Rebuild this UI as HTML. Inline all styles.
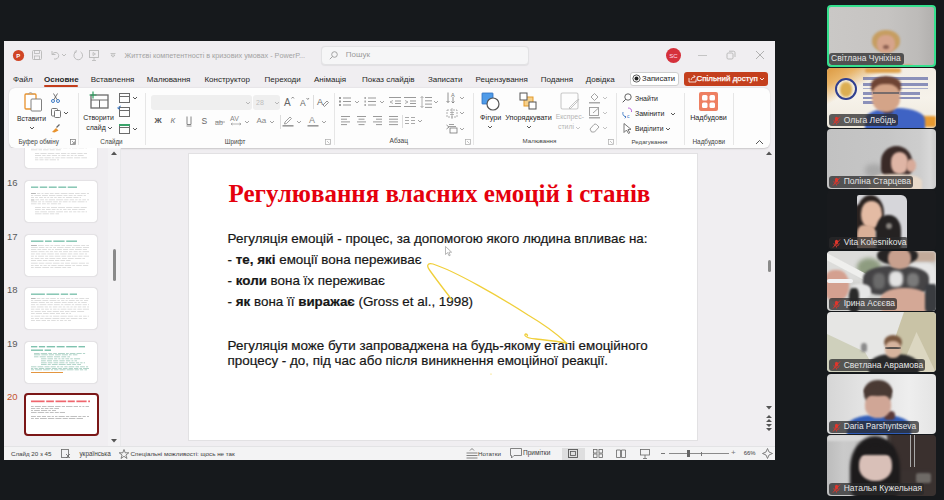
<!DOCTYPE html>
<html><head><meta charset="utf-8">
<style>
*{margin:0;padding:0;box-sizing:border-box}
html,body{width:944px;height:500px;overflow:hidden;background:#16191c;font-family:"Liberation Sans",sans-serif;position:relative}
.a{position:absolute}
svg.a{overflow:visible}
.t{position:absolute;white-space:nowrap;line-height:1}
</style></head><body>

<div class="a" style="left:4px;top:41px;width:771px;height:419px;background:#f0eef1"></div>
<svg class="a" style="left:12px;top:49px;" width="13" height="13" viewBox="0 0 13 13"><circle cx="6.5" cy="6.5" r="5.6" fill="#d04526"/><text x="4.2" y="9" font-size="6" fill="#fff" font-family="Liberation Sans" font-weight="bold">P</text></svg>
<svg class="a" style="left:32px;top:50px;" width="10" height="10" viewBox="0 0 10 10"><rect x="0.5" y="0.5" width="9" height="9" rx="1" fill="none" stroke="#b8b8b8" stroke-width="0.9"/><rect x="2.5" y="0.5" width="5" height="3" fill="none" stroke="#b8b8b8" stroke-width="0.8"/><rect x="2.5" y="6" width="5" height="3.5" fill="none" stroke="#b8b8b8" stroke-width="0.8"/></svg>
<svg class="a" style="left:50px;top:50px;" width="10" height="10" viewBox="0 0 10 10"><path d="M2 1 L2 4.5 L5.5 4.5 M2.2 4.3 C4 1.5 8.5 2 8.7 5.5 C8.8 8 6.5 9.5 4 9" fill="none" stroke="#b8b8b8" stroke-width="0.9"/></svg>
<svg class="a" style="left:61px;top:53px;" width="6" height="4" viewBox="0 0 6 4"><path d="M1 1 L3 3 L5 1" fill="none" stroke="#b8b8b8" stroke-width="0.9"/></svg>
<svg class="a" style="left:73px;top:50px;" width="11" height="11" viewBox="0 0 11 11"><path d="M7.5 1.8 A4.3 4.3 0 1 1 3 1.8" fill="none" stroke="#b8b8b8" stroke-width="0.9"/><path d="M3.2 0 V2.2 H1" fill="none" stroke="#b8b8b8" stroke-width="0.8"/></svg>
<svg class="a" style="left:89px;top:50px;" width="10" height="11" viewBox="0 0 10 11"><rect x="0.5" y="0.5" width="9" height="7" fill="none" stroke="#b8b8b8" stroke-width="0.9"/><path d="M5 7.5 L5 10.5 M3 10.5 L7 10.5 M4 2.5 L4 5.5 L6.5 4 Z" fill="none" stroke="#b8b8b8" stroke-width="0.8"/></svg>
<svg class="a" style="left:110px;top:53px;" width="6" height="5" viewBox="0 0 6 5"><path d="M0.5 0.5 H5.5 M1 2 L3 4.2 L5 2 Z" fill="none" stroke="#b8b8b8" stroke-width="0.8"/></svg>
<div class="t" style="left:124.5px;top:51.5px;font-size:7.25px;color:#a3a3a3;font-weight:normal;font-family:'Liberation Sans';">Життєві компетентності в кризових умовах  -  PowerP...</div>
<div class="a" style="left:321px;top:46px;width:208px;height:19px;background:#f6f6f7;border:1px solid #e2e2e4;border-radius:4px;box-shadow:0 0.5px 1px rgba(0,0,0,.06)"></div>
<svg class="a" style="left:329px;top:51px;" width="9" height="9" viewBox="0 0 9 9"><circle cx="5.5" cy="3.5" r="2.8" fill="none" stroke="#9a9a9a" stroke-width="0.9"/><path d="M3.5 5.5 L0.8 8.2" stroke="#9a9a9a" stroke-width="0.9"/></svg>
<div class="t" style="left:345.8px;top:51.1px;font-size:8px;color:#9a9a9a;font-weight:normal;font-family:'Liberation Sans';">Пошук</div>
<svg class="a" style="left:666px;top:48px;" width="16" height="16" viewBox="0 0 16 16"><circle cx="7.5" cy="7.5" r="7.5" fill="#d5303b"/><text x="3.2" y="9.8" font-size="6" fill="#fde" font-family="Liberation Sans">SC</text></svg>
<div class="a" style="left:698px;top:55px;width:9px;height:1px;background:#c4c4c4"></div>
<svg class="a" style="left:726px;top:50px;" width="10" height="10" viewBox="0 0 10 10"><rect x="1" y="3" width="6" height="6" rx="1.2" fill="none" stroke="#b5b5b5" stroke-width="0.9"/><path d="M3 1.2 H7.5 Q9 1.2 9 2.7 V7" fill="none" stroke="#b5b5b5" stroke-width="0.9"/></svg>
<svg class="a" style="left:755px;top:50px;" width="10" height="10" viewBox="0 0 10 10"><path d="M1 1 L9 9 M9 1 L1 9" stroke="#a9a9a9" stroke-width="0.9"/></svg>
<div class="t" style="left:13.0px;top:75.6px;font-size:8px;color:#262626;font-weight:normal;font-family:'Liberation Sans';">Файл</div>
<div class="t" style="left:44.0px;top:75.6px;font-size:8px;color:#262626;font-weight:bold;font-family:'Liberation Sans';">Основне</div>
<div class="t" style="left:90.7px;top:75.6px;font-size:8px;color:#262626;font-weight:normal;font-family:'Liberation Sans';">Вставлення</div>
<div class="t" style="left:146.8px;top:75.6px;font-size:8px;color:#262626;font-weight:normal;font-family:'Liberation Sans';">Малювання</div>
<div class="t" style="left:204.4px;top:75.6px;font-size:8px;color:#262626;font-weight:normal;font-family:'Liberation Sans';">Конструктор</div>
<div class="t" style="left:264.5px;top:75.6px;font-size:8px;color:#262626;font-weight:normal;font-family:'Liberation Sans';">Переходи</div>
<div class="t" style="left:314.0px;top:75.6px;font-size:8px;color:#262626;font-weight:normal;font-family:'Liberation Sans';">Анімація</div>
<div class="t" style="left:362.0px;top:75.6px;font-size:8px;color:#262626;font-weight:normal;font-family:'Liberation Sans';">Показ слайдів</div>
<div class="t" style="left:428.0px;top:75.6px;font-size:8px;color:#262626;font-weight:normal;font-family:'Liberation Sans';">Записати</div>
<div class="t" style="left:475.6px;top:75.6px;font-size:8px;color:#262626;font-weight:normal;font-family:'Liberation Sans';">Рецензування</div>
<div class="t" style="left:540.7px;top:75.6px;font-size:8px;color:#262626;font-weight:normal;font-family:'Liberation Sans';">Подання</div>
<div class="t" style="left:585.8px;top:75.6px;font-size:8px;color:#262626;font-weight:normal;font-family:'Liberation Sans';">Довідка</div>
<div class="a" style="left:44px;top:84.5px;width:34px;height:2px;background:#c43e1c;border-radius:1px"></div>
<div class="a" style="left:629.5px;top:71.5px;width:49.5px;height:14.5px;background:#fff;border:1px solid #cfcfcf;border-radius:3px"></div>
<svg class="a" style="left:631.5px;top:74px;" width="9" height="9" viewBox="0 0 9 9"><circle cx="4.5" cy="4.5" r="3.6" fill="none" stroke="#333" stroke-width="0.8"/><circle cx="4.5" cy="4.5" r="2" fill="#222"/></svg>
<div class="t" style="left:642.0px;top:74.8px;font-size:7.7px;color:#222;font-weight:normal;font-family:'Liberation Sans';">Записати</div>
<div class="a" style="left:684px;top:71.5px;width:83.5px;height:14.5px;background:#c43f1d;border-radius:3px"></div>
<svg class="a" style="left:688px;top:74px;" width="9" height="9" viewBox="0 0 9 9"><path d="M1 4 V8 H8 V5.5 M3 6 Q3.5 3 7 2.5 L5.5 1 M7 2.5 L5.5 4" fill="none" stroke="#fff" stroke-width="0.8"/></svg>
<div class="t" style="left:696.4px;top:74.6px;font-size:8px;color:#fff;font-weight:normal;font-family:'Liberation Sans';-webkit-text-stroke:0.25px #fff;">Спільний доступ</div>
<svg class="a" style="left:759px;top:77px;" width="6" height="4" viewBox="0 0 6 4"><path d="M1 1 L3 3 L5 1" fill="none" stroke="#fff" stroke-width="0.9"/></svg>
<div class="a" style="left:9px;top:88px;width:761px;height:60px;background:#fdfdfd;border-radius:6px;box-shadow:0 0.5px 1.5px rgba(0,0,0,.16)"></div>
<div class="a" style="left:77.6px;top:93px;width:1px;height:52px;background:#e6e6e6"></div>
<div class="a" style="left:145.4px;top:93px;width:1px;height:52px;background:#e6e6e6"></div>
<div class="a" style="left:333.5px;top:93px;width:1px;height:52px;background:#e6e6e6"></div>
<div class="a" style="left:473px;top:93px;width:1px;height:52px;background:#e6e6e6"></div>
<div class="a" style="left:616px;top:93px;width:1px;height:52px;background:#e6e6e6"></div>
<div class="a" style="left:683.5px;top:93px;width:1px;height:52px;background:#e6e6e6"></div>
<div class="a" style="left:733px;top:93px;width:1px;height:52px;background:#e6e6e6"></div>
<svg class="a" style="left:24px;top:91px;" width="19" height="21" viewBox="0 0 19 21"><rect x="1" y="3" width="11" height="15" rx="1" fill="#fff" stroke="#e8922d" stroke-width="1.3"/><path d="M4 3.5 L6.5 1 L9 3.5" fill="none" stroke="#9a9a9a" stroke-width="0.9"/><rect x="7" y="8" width="10.5" height="12" rx="1" fill="#fff" stroke="#808080" stroke-width="1"/></svg>
<div class="t" style="left:-28.5px;width:120px;text-align:center;top:115.8px;font-size:6.8px;color:#262626;font-weight:normal;">Вставити</div>
<svg class="a" style="left:28.5px;top:126px;" width="6" height="4" viewBox="0 0 6 4"><path d="M1 1 L3 3 L5 1" fill="none" stroke="#444" stroke-width="0.9"/></svg>
<svg class="a" style="left:51px;top:93px;" width="9" height="10" viewBox="0 0 9 10"><circle cx="2" cy="8" r="1.5" fill="none" stroke="#2e6fbf" stroke-width="0.9"/><circle cx="7" cy="8" r="1.5" fill="none" stroke="#2e6fbf" stroke-width="0.9"/><path d="M2.8 6.8 L6.5 0.5 M6.2 6.8 L2.5 0.5" stroke="#555" stroke-width="0.8"/></svg>
<svg class="a" style="left:51px;top:108px;" width="10" height="10" viewBox="0 0 10 10"><rect x="0.5" y="0.5" width="6" height="7.5" rx="1" fill="none" stroke="#666" stroke-width="0.9"/><rect x="3.5" y="2.5" width="6" height="7" rx="1" fill="#fff" stroke="#666" stroke-width="0.9"/></svg>
<svg class="a" style="left:63px;top:111px;" width="6" height="4" viewBox="0 0 6 4"><path d="M1 1 L3 3 L5 1" fill="none" stroke="#444" stroke-width="0.9"/></svg>
<svg class="a" style="left:51px;top:123px;" width="10" height="10" viewBox="0 0 10 10"><path d="M1 9 L5 5 L7.5 7.5 L3.5 9.5 Z" fill="#e8922d"/><path d="M5.5 4.5 L8.5 1.5" stroke="#666" stroke-width="1.2"/></svg>
<div class="t" style="left:-21.3px;width:120px;text-align:center;top:139.1px;font-size:6.3px;color:#444;font-weight:normal;">Буфер обміну</div>
<svg class="a" style="left:70px;top:139px;" width="6" height="6" viewBox="0 0 6 6"><rect x="0.5" y="0.5" width="5" height="5" fill="none" stroke="#777" stroke-width="0.7"/><path d="M2 2 L4.5 4.5 M4.5 2.5 V4.5 H2.5" fill="none" stroke="#777" stroke-width="0.7"/></svg>
<svg class="a" style="left:89px;top:91px;" width="20" height="19" viewBox="0 0 20 19"><rect x="2" y="4" width="17" height="13" fill="none" stroke="#6b6b6b" stroke-width="1.3"/><path d="M2 9 H19 M10.5 9 V17" stroke="#6b6b6b" stroke-width="1"/><path d="M4 0.5 V7.5 M0.5 4 H7.5" stroke="#2a9d5c" stroke-width="1.2"/></svg>
<div class="t" style="left:38.5px;width:120px;text-align:center;top:114.2px;font-size:7px;color:#262626;font-weight:normal;">Створити</div>
<div class="t" style="left:36.0px;width:120px;text-align:center;top:124.2px;font-size:7px;color:#262626;font-weight:normal;">слайд</div>
<svg class="a" style="left:106.5px;top:126px;" width="6" height="4" viewBox="0 0 6 4"><path d="M1 1 L3 3 L5 1" fill="none" stroke="#444" stroke-width="0.9"/></svg>
<svg class="a" style="left:119px;top:92.7px;" width="11" height="10" viewBox="0 0 11 10"><rect x="0.5" y="0.5" width="10" height="9" fill="none" stroke="#6b6b6b" stroke-width="1"/><path d="M0.5 3.5 H10.5" stroke="#6b6b6b" stroke-width="1"/></svg>
<svg class="a" style="left:119px;top:107px;" width="11" height="10" viewBox="0 0 11 10"><rect x="0.5" y="0.5" width="10" height="9" fill="none" stroke="#6b6b6b" stroke-width="1"/><path d="M0.5 3.5 H10.5" stroke="#6b6b6b" stroke-width="1"/></svg>
<svg class="a" style="left:119px;top:123.69999999999999px;" width="11" height="10" viewBox="0 0 11 10"><rect x="0.5" y="0.5" width="10" height="9" fill="none" stroke="#6b6b6b" stroke-width="1"/><path d="M0.5 3.5 H10.5" stroke="#6b6b6b" stroke-width="1"/></svg>
<div class="a" style="left:119px;top:123.7px;width:11px;height:2px;background:#3aa36a"></div>
<svg class="a" style="left:117px;top:105px;" width="5" height="5" viewBox="0 0 5 5"><path d="M4 1 Q1 1 1.5 4 M0.5 2.5 L1.5 4 L3 3" fill="none" stroke="#2e6fbf" stroke-width="0.8"/></svg>
<svg class="a" style="left:131.7px;top:95.7px;" width="6" height="4" viewBox="0 0 6 4"><path d="M1 1 L3 3 L5 1" fill="none" stroke="#444" stroke-width="0.9"/></svg>
<svg class="a" style="left:131.7px;top:126.69999999999999px;" width="6" height="4" viewBox="0 0 6 4"><path d="M1 1 L3 3 L5 1" fill="none" stroke="#444" stroke-width="0.9"/></svg>
<div class="t" style="left:51.4px;width:120px;text-align:center;top:139.1px;font-size:6.3px;color:#444;font-weight:normal;">Слайди</div>
<div class="a" style="left:151px;top:95px;width:101px;height:14.5px;background:#efefef;border-radius:3px"></div>
<div class="a" style="left:253px;top:95px;width:27px;height:14.5px;background:#efefef;border-radius:3px"></div>
<svg class="a" style="left:245px;top:100.5px;" width="6" height="4" viewBox="0 0 6 4"><path d="M1 1 L3 3 L5 1" fill="none" stroke="#b0b0b0" stroke-width="0.9"/></svg>
<svg class="a" style="left:274px;top:100.5px;" width="6" height="4" viewBox="0 0 6 4"><path d="M1 1 L3 3 L5 1" fill="none" stroke="#b0b0b0" stroke-width="0.9"/></svg>
<div class="t" style="left:256.0px;top:98.7px;font-size:7px;color:#bdbdbd;font-weight:normal;font-family:'Liberation Sans';">28</div>
<svg class="a" style="left:284px;top:96px;" width="11" height="11" viewBox="0 0 11 11"><text x="0" y="10" font-size="10" fill="#666" font-family="Liberation Sans">A</text><path d="M7.5 2.5 L8.8 1 L10 2.5" fill="none" stroke="#666" stroke-width="0.7"/></svg>
<svg class="a" style="left:300px;top:97px;" width="10" height="10" viewBox="0 0 10 10"><text x="0" y="9" font-size="8.5" fill="#666" font-family="Liberation Sans">A</text><path d="M6.5 1 L7.8 2.5 L9 1" fill="none" stroke="#666" stroke-width="0.7"/></svg>
<div class="a" style="left:313px;top:95px;width:1px;height:14px;background:#ddd"></div>
<svg class="a" style="left:317px;top:96px;" width="12" height="11" viewBox="0 0 12 11"><text x="0" y="9" font-size="9" fill="#666" font-family="Liberation Sans">A</text><path d="M6 9 L10 5 L11.5 6.5 L7.5 10.5 Z" fill="none" stroke="#666" stroke-width="0.7"/></svg>
<div class="t" style="left:154.5px;top:117.0px;font-size:8px;color:#555;font-weight:bold;font-family:'Liberation Sans';">Ж</div>
<div class="t" style="left:170.5px;top:117.0px;font-size:8px;color:#777;font-weight:normal;font-family:'Liberation Sans';font-style:italic">К</div>
<svg class="a" style="left:186px;top:116px;" width="6" height="11" viewBox="0 0 6 11"><path d="M1 0.5 V8.5 H5 V0.5" fill="none" stroke="#777" stroke-width="0.9"/><path d="M0.5 10 H5.5" stroke="#777" stroke-width="0.8"/></svg>
<div class="t" style="left:201.5px;top:116.7px;font-size:8.5px;color:#666;font-weight:normal;font-family:'Liberation Sans';">S</div>
<svg class="a" style="left:215px;top:117px;" width="11" height="9" viewBox="0 0 11 9"><text x="0" y="7.5" font-size="7" fill="#888" font-family="Liberation Sans">ab</text><path d="M0 5 H10" stroke="#888" stroke-width="0.7"/></svg>
<svg class="a" style="left:230px;top:114px;" width="13" height="13" viewBox="0 0 13 13"><text x="0" y="7" font-size="7" fill="#888" font-family="Liberation Sans">AV</text><path d="M1 10 H11 M1 10 L2.5 9 M1 10 L2.5 11 M11 10 L9.5 9 M11 10 L9.5 11" fill="none" stroke="#888" stroke-width="0.6"/></svg>
<svg class="a" style="left:244px;top:119.5px;" width="6" height="4" viewBox="0 0 6 4"><path d="M1 1 L3 3 L5 1" fill="none" stroke="#999" stroke-width="0.9"/></svg>
<div class="t" style="left:256.5px;top:117.0px;font-size:8px;color:#888;font-weight:normal;font-family:'Liberation Sans';">Aa</div>
<svg class="a" style="left:269px;top:119.5px;" width="6" height="4" viewBox="0 0 6 4"><path d="M1 1 L3 3 L5 1" fill="none" stroke="#999" stroke-width="0.9"/></svg>
<div class="a" style="left:280px;top:115px;width:1px;height:14px;background:#ddd"></div>
<svg class="a" style="left:282px;top:114px;" width="12" height="13" viewBox="0 0 12 13"><path d="M3 8 L8 3 L9.5 4.5 L4.5 9.5 L2.5 10 Z" fill="none" stroke="#888" stroke-width="0.8"/><rect x="0.5" y="11" width="11" height="1.6" fill="#999"/></svg>
<svg class="a" style="left:296px;top:119.5px;" width="6" height="4" viewBox="0 0 6 4"><path d="M1 1 L3 3 L5 1" fill="none" stroke="#999" stroke-width="0.9"/></svg>
<svg class="a" style="left:307px;top:114px;" width="12" height="13" viewBox="0 0 12 13"><text x="2" y="9" font-size="9" fill="#888" font-family="Liberation Sans">A</text><rect x="0.5" y="11" width="11" height="1.6" fill="#999"/></svg>
<svg class="a" style="left:321px;top:119.5px;" width="6" height="4" viewBox="0 0 6 4"><path d="M1 1 L3 3 L5 1" fill="none" stroke="#999" stroke-width="0.9"/></svg>
<div class="t" style="left:175.0px;width:120px;text-align:center;top:138.5px;font-size:6.3px;color:#444;font-weight:normal;">Шрифт</div>
<svg class="a" style="left:325px;top:139px;" width="6" height="6" viewBox="0 0 6 6"><rect x="0.5" y="0.5" width="5" height="5" fill="none" stroke="#aaa" stroke-width="0.7"/><path d="M2 2 L4.5 4.5" stroke="#aaa" stroke-width="0.7"/></svg>
<svg class="a" style="left:339px;top:97px;" width="12" height="10" viewBox="0 0 12 10"><rect x="0" y="0.0" width="2" height="2" fill="#9a9a9a"/><rect x="4" y="0.5" width="8" height="1" fill="#9a9a9a"/><rect x="0" y="3.5" width="2" height="2" fill="#9a9a9a"/><rect x="4" y="4.0" width="8" height="1" fill="#9a9a9a"/><rect x="0" y="7.0" width="2" height="2" fill="#9a9a9a"/><rect x="4" y="7.5" width="8" height="1" fill="#9a9a9a"/></svg>
<svg class="a" style="left:354px;top:100px;" width="6" height="4" viewBox="0 0 6 4"><path d="M1 1 L3 3 L5 1" fill="none" stroke="#999" stroke-width="0.9"/></svg>
<svg class="a" style="left:364px;top:97px;" width="12" height="10" viewBox="0 0 12 10"><rect x="0.5" y="0.0" width="1.3" height="2" fill="#9a9a9a"/><rect x="4" y="0.5" width="8" height="1" fill="#9a9a9a"/><rect x="0.5" y="3.5" width="1.3" height="2" fill="#9a9a9a"/><rect x="4" y="4.0" width="8" height="1" fill="#9a9a9a"/><rect x="0.5" y="7.0" width="1.3" height="2" fill="#9a9a9a"/><rect x="4" y="7.5" width="8" height="1" fill="#9a9a9a"/></svg>
<svg class="a" style="left:379px;top:100px;" width="6" height="4" viewBox="0 0 6 4"><path d="M1 1 L3 3 L5 1" fill="none" stroke="#999" stroke-width="0.9"/></svg>
<svg class="a" style="left:389px;top:97px;" width="12" height="10" viewBox="0 0 12 10"><rect x="0" y="0" width="12" height="1" fill="#9a9a9a"/><rect x="6" y="3.5" width="6" height="1" fill="#9a9a9a"/><rect x="6" y="6" width="6" height="1" fill="#9a9a9a"/><rect x="0" y="9" width="12" height="1" fill="#9a9a9a"/><path d="M4 3.5 L1 5 L4 6.5" fill="none" stroke="#9a9a9a" stroke-width="0.8"/></svg>
<svg class="a" style="left:404px;top:97px;" width="12" height="10" viewBox="0 0 12 10"><rect x="0" y="0" width="12" height="1" fill="#9a9a9a"/><rect x="6" y="3.5" width="6" height="1" fill="#9a9a9a"/><rect x="6" y="6" width="6" height="1" fill="#9a9a9a"/><rect x="0" y="9" width="12" height="1" fill="#9a9a9a"/><path d="M1 3.5 L4 5 L1 6.5" fill="none" stroke="#9a9a9a" stroke-width="0.8"/></svg>
<svg class="a" style="left:420px;top:96px;" width="12" height="12" viewBox="0 0 12 12"><path d="M2 0.5 V11.5 M0.5 2 L2 0.5 L3.5 2 M0.5 10 L2 11.5 L3.5 10" fill="none" stroke="#9a9a9a" stroke-width="0.8"/><rect x="5" y="1.0" width="7" height="1" fill="#9a9a9a"/><rect x="5" y="4.3" width="7" height="1" fill="#9a9a9a"/><rect x="5" y="7.6" width="7" height="1" fill="#9a9a9a"/><rect x="5" y="10.899999999999999" width="7" height="1" fill="#9a9a9a"/></svg>
<svg class="a" style="left:433px;top:100px;" width="6" height="4" viewBox="0 0 6 4"><path d="M1 1 L3 3 L5 1" fill="none" stroke="#999" stroke-width="0.9"/></svg>
<svg class="a" style="left:341.1px;top:116px;" width="10" height="10" viewBox="0 0 10 10"><rect x="0" y="0.0" width="9" height="1" fill="#9a9a9a"/><rect x="0" y="2.7" width="6" height="1" fill="#9a9a9a"/><rect x="0" y="5.4" width="9" height="1" fill="#9a9a9a"/><rect x="0" y="8.100000000000001" width="6" height="1" fill="#9a9a9a"/></svg>
<svg class="a" style="left:357.0px;top:116px;" width="10" height="10" viewBox="0 0 10 10"><rect x="0" y="0.0" width="9" height="1" fill="#9a9a9a"/><rect x="1.5" y="2.7" width="6" height="1" fill="#9a9a9a"/><rect x="0" y="5.4" width="9" height="1" fill="#9a9a9a"/><rect x="1.5" y="8.100000000000001" width="6" height="1" fill="#9a9a9a"/></svg>
<svg class="a" style="left:372.5px;top:116px;" width="10" height="10" viewBox="0 0 10 10"><rect x="0" y="0.0" width="9" height="1" fill="#9a9a9a"/><rect x="3" y="2.7" width="6" height="1" fill="#9a9a9a"/><rect x="0" y="5.4" width="9" height="1" fill="#9a9a9a"/><rect x="3" y="8.100000000000001" width="6" height="1" fill="#9a9a9a"/></svg>
<svg class="a" style="left:388.5px;top:116px;" width="10" height="10" viewBox="0 0 10 10"><rect x="0" y="0.0" width="9" height="1" fill="#9a9a9a"/><rect x="0" y="2.7" width="9" height="1" fill="#9a9a9a"/><rect x="0" y="5.4" width="9" height="1" fill="#9a9a9a"/><rect x="0" y="8.100000000000001" width="9" height="1" fill="#9a9a9a"/></svg>
<div class="a" style="left:401.5px;top:115px;width:1px;height:13px;background:#ddd"></div>
<svg class="a" style="left:405px;top:117px;" width="10" height="8" viewBox="0 0 10 8"><rect x="0" y="0" width="4" height="1" fill="#aaa"/><rect x="0" y="3" width="4" height="1" fill="#aaa"/><rect x="0" y="6" width="4" height="1" fill="#aaa"/><rect x="6" y="0" width="4" height="1" fill="#aaa"/><rect x="6" y="3" width="4" height="1" fill="#aaa"/><rect x="6" y="6" width="4" height="1" fill="#aaa"/></svg>
<svg class="a" style="left:417px;top:119px;" width="6" height="4" viewBox="0 0 6 4"><path d="M1 1 L3 3 L5 1" fill="none" stroke="#999" stroke-width="0.9"/></svg>
<svg class="a" style="left:446px;top:92px;" width="12" height="12" viewBox="0 0 12 12"><path d="M2 0.5 V10.5 M0.5 9 L2 10.5 L3.5 9 M7 11 V5 M5.5 9.5 L7 11 L8.5 9.5" fill="none" stroke="#777" stroke-width="0.8"/><text x="5" y="5" font-size="5.5" fill="#777" font-family="Liberation Sans">A</text></svg>
<svg class="a" style="left:458.6px;top:96px;" width="6" height="4" viewBox="0 0 6 4"><path d="M1 1 L3 3 L5 1" fill="none" stroke="#999" stroke-width="0.9"/></svg>
<svg class="a" style="left:446px;top:108px;" width="12" height="11" viewBox="0 0 12 11"><rect x="1" y="2" width="10" height="7" fill="none" stroke="#9a9a9a" stroke-width="0.8" stroke-dasharray="2 1"/><path d="M6 0 V11 M4 4.5 H8 M4 6.5 H8" stroke="#9a9a9a" stroke-width="0.7"/></svg>
<svg class="a" style="left:458.6px;top:111.3px;" width="6" height="4" viewBox="0 0 6 4"><path d="M1 1 L3 3 L5 1" fill="none" stroke="#999" stroke-width="0.9"/></svg>
<svg class="a" style="left:446px;top:123px;" width="12" height="11" viewBox="0 0 12 11"><path d="M0.5 2 L3 4 L0.5 6" fill="none" stroke="#777" stroke-width="0.8"/><rect x="4" y="5" width="7" height="5" fill="none" stroke="#777" stroke-width="0.8"/><path d="M3 1.5 H8 M3 3.5 H10" stroke="#777" stroke-width="0.7"/></svg>
<svg class="a" style="left:458.6px;top:126.69999999999999px;" width="6" height="4" viewBox="0 0 6 4"><path d="M1 1 L3 3 L5 1" fill="none" stroke="#999" stroke-width="0.9"/></svg>
<div class="t" style="left:338.8px;width:120px;text-align:center;top:137.8px;font-size:6.6px;color:#444;font-weight:normal;">Абзац</div>
<svg class="a" style="left:465px;top:139px;" width="6" height="6" viewBox="0 0 6 6"><rect x="0.5" y="0.5" width="5" height="5" fill="none" stroke="#aaa" stroke-width="0.7"/><path d="M2 2 L4.5 4.5" stroke="#aaa" stroke-width="0.7"/></svg>
<svg class="a" style="left:481px;top:92px;" width="20" height="19" viewBox="0 0 20 19"><rect x="1" y="1" width="11" height="11" rx="0.5" fill="#4f9be8" stroke="#2d6fc0" stroke-width="0.8"/><circle cx="12" cy="12" r="6" fill="#fff" stroke="#555" stroke-width="1.2"/></svg>
<div class="t" style="left:430.7px;width:120px;text-align:center;top:114.0px;font-size:7.2px;color:#262626;font-weight:normal;">Фігури</div>
<svg class="a" style="left:487px;top:125px;" width="6" height="4" viewBox="0 0 6 4"><path d="M1 1 L3 3 L5 1" fill="none" stroke="#444" stroke-width="0.9"/></svg>
<svg class="a" style="left:519px;top:92px;" width="19" height="19" viewBox="0 0 19 19"><rect x="5" y="5" width="9" height="9" fill="#f6d08a" stroke="#e39a2a" stroke-width="1"/><rect x="1" y="1" width="7" height="7" fill="#fff" stroke="#555" stroke-width="1"/><rect x="10" y="10" width="7" height="7" fill="#fff" stroke="#555" stroke-width="1"/></svg>
<div class="t" style="left:468.5px;width:120px;text-align:center;top:114.0px;font-size:7.3px;color:#262626;font-weight:normal;">Упорядкувати</div>
<svg class="a" style="left:525.5px;top:125px;" width="6" height="4" viewBox="0 0 6 4"><path d="M1 1 L3 3 L5 1" fill="none" stroke="#444" stroke-width="0.9"/></svg>
<svg class="a" style="left:560px;top:92px;" width="21" height="19" viewBox="0 0 21 19"><rect x="1" y="1" width="17" height="16" rx="1.5" fill="none" stroke="#c9c9c9" stroke-width="1.1"/><path d="M9 16 L16 9 L19 7 L17 10 L10 17 Z" fill="none" stroke="#bdbdbd" stroke-width="0.9"/></svg>
<div class="t" style="left:509.8px;width:120px;text-align:center;top:114.2px;font-size:6.9px;color:#b5b5b5;font-weight:normal;">Експрес-</div>
<div class="t" style="left:558.0px;top:123.8px;font-size:6.9px;color:#b5b5b5;font-weight:normal;font-family:'Liberation Sans';">стилі</div>
<svg class="a" style="left:575px;top:125.6px;" width="6" height="4" viewBox="0 0 6 4"><path d="M1 1 L3 3 L5 1" fill="none" stroke="#c0c0c0" stroke-width="0.9"/></svg>
<svg class="a" style="left:589px;top:92px;" width="11" height="12" viewBox="0 0 11 12"><path d="M2 5 L5.5 1.5 L9 5 L5.5 8.5 Z" fill="none" stroke="#9a9a9a" stroke-width="0.9"/><rect x="0" y="10" width="11" height="1.5" fill="#aaa"/></svg>
<svg class="a" style="left:602px;top:96px;" width="6" height="4" viewBox="0 0 6 4"><path d="M1 1 L3 3 L5 1" fill="none" stroke="#bbb" stroke-width="0.9"/></svg>
<svg class="a" style="left:589px;top:107px;" width="11" height="12" viewBox="0 0 11 12"><rect x="0.5" y="0.5" width="9" height="8" fill="none" stroke="#9a9a9a" stroke-width="0.9"/><path d="M4 6 L9 1.5" stroke="#9a9a9a" stroke-width="0.9"/><rect x="0" y="10" width="11" height="1.5" fill="#aaa"/></svg>
<svg class="a" style="left:602px;top:111.3px;" width="6" height="4" viewBox="0 0 6 4"><path d="M1 1 L3 3 L5 1" fill="none" stroke="#bbb" stroke-width="0.9"/></svg>
<svg class="a" style="left:589px;top:123px;" width="11" height="10" viewBox="0 0 11 10"><path d="M1 6 L5 1.5 Q6 0.5 7.5 1.5 L10 4 L5.5 9 H2.5 Z" fill="none" stroke="#9a9a9a" stroke-width="0.9"/></svg>
<svg class="a" style="left:602px;top:126px;" width="6" height="4" viewBox="0 0 6 4"><path d="M1 1 L3 3 L5 1" fill="none" stroke="#bbb" stroke-width="0.9"/></svg>
<div class="t" style="left:479.5px;width:120px;text-align:center;top:138.0px;font-size:6.2px;color:#444;font-weight:normal;">Малювання</div>
<svg class="a" style="left:608px;top:139px;" width="6" height="6" viewBox="0 0 6 6"><rect x="0.5" y="0.5" width="5" height="5" fill="none" stroke="#aaa" stroke-width="0.7"/><path d="M2 2 L4.5 4.5" stroke="#aaa" stroke-width="0.7"/></svg>
<svg class="a" style="left:622px;top:93px;" width="10" height="10" viewBox="0 0 10 10"><circle cx="6" cy="4" r="3.2" fill="none" stroke="#555" stroke-width="0.9"/><path d="M3.7 6.3 L0.7 9.3" stroke="#555" stroke-width="1"/></svg>
<div class="t" style="left:635.0px;top:94.7px;font-size:7px;color:#262626;font-weight:normal;font-family:'Liberation Sans';">Знайти</div>
<svg class="a" style="left:621px;top:107px;" width="12" height="12" viewBox="0 0 12 12"><path d="M2 5 Q1 9 5 10 M5 10 L3.5 8.8 M5 10 L3.8 11.3" fill="none" stroke="#2e6fbf" stroke-width="0.8"/><path d="M7 1 Q11 1 10.5 5" fill="none" stroke="#b04ad0" stroke-width="0.8"/><text x="6" y="11" font-size="5" fill="#2e6fbf" font-family="Liberation Sans">c</text></svg>
<div class="t" style="left:635.0px;top:109.7px;font-size:7px;color:#262626;font-weight:normal;font-family:'Liberation Sans';">Замінити</div>
<svg class="a" style="left:670px;top:111.5px;" width="6" height="4" viewBox="0 0 6 4"><path d="M1 1 L3 3 L5 1" fill="none" stroke="#444" stroke-width="0.9"/></svg>
<svg class="a" style="left:623px;top:123px;" width="9" height="11" viewBox="0 0 9 11"><path d="M1 0.5 L1 9.5 L3.5 7 L5.5 10.5 L6.8 9.8 L5 6.5 L8 6.3 Z" fill="#fff" stroke="#555" stroke-width="0.8"/></svg>
<div class="t" style="left:635.0px;top:125.7px;font-size:6.8px;color:#262626;font-weight:normal;font-family:'Liberation Sans';">Виділити</div>
<svg class="a" style="left:665px;top:126.6px;" width="6" height="4" viewBox="0 0 6 4"><path d="M1 1 L3 3 L5 1" fill="none" stroke="#444" stroke-width="0.9"/></svg>
<div class="t" style="left:589.5px;width:120px;text-align:center;top:138.9px;font-size:6.1px;color:#444;font-weight:normal;">Редагування</div>
<svg class="a" style="left:699px;top:92px;" width="19" height="19" viewBox="0 0 19 19"><rect x="0" y="0" width="19" height="19" rx="2" fill="#ee8062"/><rect x="3" y="3" width="5.5" height="5.5" rx="1.5" fill="#fff"/><rect x="10.5" y="3" width="5.5" height="5.5" rx="1.5" fill="#fff"/><rect x="3" y="10.5" width="5.5" height="5.5" rx="1.5" fill="#fff"/><rect x="10.5" y="10.5" width="5.5" height="5.5" rx="1.5" fill="#fff"/></svg>
<div class="t" style="left:648.5px;width:120px;text-align:center;top:114.2px;font-size:7.2px;color:#262626;font-weight:normal;">Надбудови</div>
<div class="t" style="left:648.8px;width:120px;text-align:center;top:138.5px;font-size:6.4px;color:#444;font-weight:normal;">Надбудови</div>
<svg class="a" style="left:755px;top:139px;" width="9" height="6" viewBox="0 0 9 6"><path d="M1 5 L4.5 1.5 L8 5" fill="none" stroke="#444" stroke-width="0.9"/></svg>
<div class="a" style="left:4px;top:148px;width:116px;height:298px;background:#f0eef1"></div>
<div class="a" style="left:108px;top:148px;width:12px;height:298px;background:#f3f2f4"></div>
<div class="a" style="left:120px;top:148px;width:1px;height:298px;background:#e8e8ea"></div>
<svg class="a" style="left:110px;top:150px;" width="8" height="6" viewBox="0 0 8 6"><path d="M1 5 L4 1.5 L7 5 Z" fill="#555"/></svg>
<svg class="a" style="left:110px;top:438px;" width="8" height="6" viewBox="0 0 8 6"><path d="M1 1 L4 4.5 L7 1 Z" fill="#555"/></svg>
<div class="a" style="left:112.5px;top:249px;width:3px;height:32px;background:#8a8a8a;border-radius:2px"></div>
<div class="a" style="left:0;top:0;width:944px;height:500px;clip-path:inset(148px 0 54px 0)">
<div class="a" style="left:25.4px;top:127px;width:72px;height:41px;background:#fff;border-radius:3px;box-shadow:0 0 1.2px rgba(0,0,0,.35)"></div>
<svg class="a" style="left:25.4px;top:127px;" width="72" height="41" viewBox="0 0 72 41"><rect x="6.0" y="5.5" width="8.6" height="1.4" fill="#2a9a7a" opacity="0.6"/><rect x="16.2" y="5.5" width="7.2" height="1.4" fill="#2a9a7a" opacity="0.6"/><rect x="25.0" y="5.5" width="11.2" height="1.4" fill="#2a9a7a" opacity="0.6"/><rect x="37.8" y="5.5" width="6.6" height="1.4" fill="#2a9a7a" opacity="0.6"/><rect x="46.0" y="5.5" width="6.0" height="1.4" fill="#2a9a7a" opacity="0.6"/><rect x="6.0" y="12" width="3.8" height="0.8999999999999999" fill="#444" opacity="0.42"/><rect x="10.9" y="12" width="2.3" height="0.7" fill="#8a8a8a" opacity="0.42"/><rect x="14.3" y="12" width="4.5" height="0.7" fill="#8a8a8a" opacity="0.42"/><rect x="20.0" y="12" width="2.2" height="0.7" fill="#8a8a8a" opacity="0.42"/><rect x="23.2" y="12" width="4.2" height="0.7" fill="#8a8a8a" opacity="0.42"/><rect x="28.5" y="12" width="2.3" height="0.7" fill="#8a8a8a" opacity="0.42"/><rect x="32.0" y="12" width="2.5" height="0.7" fill="#8a8a8a" opacity="0.42"/><rect x="35.5" y="12" width="4.1" height="0.7" fill="#8a8a8a" opacity="0.42"/><rect x="40.7" y="12" width="6.1" height="0.7" fill="#8a8a8a" opacity="0.42"/><rect x="48.0" y="12" width="2.6" height="0.7" fill="#8a8a8a" opacity="0.42"/><rect x="51.7" y="12" width="3.1" height="0.7" fill="#8a8a8a" opacity="0.42"/><rect x="55.9" y="12" width="5.1" height="0.7" fill="#8a8a8a" opacity="0.42"/><rect x="62.1" y="12" width="1.9" height="0.7" fill="#8a8a8a" opacity="0.42"/><rect x="6.0" y="14" width="4.9" height="0.7" fill="#8a8a8a" opacity="0.42"/><rect x="12.0" y="14" width="4.0" height="0.7" fill="#8a8a8a" opacity="0.42"/><rect x="17.1" y="14" width="6.9" height="0.7" fill="#8a8a8a" opacity="0.42"/><rect x="25.1" y="14" width="2.2" height="0.7" fill="#8a8a8a" opacity="0.42"/><rect x="28.4" y="14" width="6.3" height="0.7" fill="#8a8a8a" opacity="0.42"/><rect x="35.8" y="14" width="3.4" height="0.7" fill="#8a8a8a" opacity="0.42"/><rect x="40.3" y="14" width="2.7" height="0.7" fill="#8a8a8a" opacity="0.42"/><rect x="44.1" y="14" width="2.6" height="0.7" fill="#8a8a8a" opacity="0.42"/><rect x="47.8" y="14" width="3.5" height="0.7" fill="#8a8a8a" opacity="0.42"/><rect x="52.5" y="14" width="6.1" height="0.7" fill="#8a8a8a" opacity="0.42"/><rect x="59.7" y="14" width="2.3" height="0.7" fill="#8a8a8a" opacity="0.42"/><rect x="6.0" y="16" width="4.9" height="0.7" fill="#8a8a8a" opacity="0.42"/><rect x="12.0" y="16" width="5.2" height="0.7" fill="#8a8a8a" opacity="0.42"/><rect x="18.3" y="16" width="3.9" height="0.7" fill="#8a8a8a" opacity="0.42"/><rect x="23.3" y="16" width="4.7" height="0.7" fill="#8a8a8a" opacity="0.42"/><rect x="29.1" y="16" width="2.3" height="0.7" fill="#8a8a8a" opacity="0.42"/><rect x="32.5" y="16" width="2.3" height="0.7" fill="#8a8a8a" opacity="0.42"/><rect x="35.9" y="16" width="3.0" height="0.7" fill="#8a8a8a" opacity="0.42"/><rect x="40.0" y="16" width="5.4" height="0.7" fill="#8a8a8a" opacity="0.42"/><rect x="46.5" y="16" width="4.1" height="0.7" fill="#8a8a8a" opacity="0.42"/><rect x="51.8" y="16" width="3.6" height="0.7" fill="#8a8a8a" opacity="0.42"/><rect x="6.0" y="18.5" width="4.9" height="0.8999999999999999" fill="#444" opacity="0.42"/><rect x="12.0" y="18.5" width="4.3" height="0.7" fill="#8a8a8a" opacity="0.42"/><rect x="17.4" y="18.5" width="3.5" height="0.7" fill="#8a8a8a" opacity="0.42"/><rect x="22.0" y="18.5" width="6.0" height="0.7" fill="#8a8a8a" opacity="0.42"/><rect x="29.1" y="18.5" width="5.5" height="0.7" fill="#8a8a8a" opacity="0.42"/><rect x="35.7" y="18.5" width="3.2" height="0.7" fill="#8a8a8a" opacity="0.42"/><rect x="40.0" y="18.5" width="4.9" height="0.7" fill="#8a8a8a" opacity="0.42"/><rect x="46.0" y="18.5" width="4.6" height="0.7" fill="#8a8a8a" opacity="0.42"/><rect x="51.7" y="18.5" width="6.4" height="0.7" fill="#8a8a8a" opacity="0.42"/><rect x="59.2" y="18.5" width="4.8" height="0.7" fill="#8a8a8a" opacity="0.42"/><rect x="6.0" y="20.5" width="3.4" height="0.7" fill="#8a8a8a" opacity="0.42"/><rect x="10.5" y="20.5" width="6.9" height="0.7" fill="#8a8a8a" opacity="0.42"/><rect x="18.5" y="20.5" width="2.6" height="0.7" fill="#8a8a8a" opacity="0.42"/><rect x="22.2" y="20.5" width="4.1" height="0.7" fill="#8a8a8a" opacity="0.42"/><rect x="27.4" y="20.5" width="5.8" height="0.7" fill="#8a8a8a" opacity="0.42"/><rect x="34.3" y="20.5" width="2.8" height="0.7" fill="#8a8a8a" opacity="0.42"/><rect x="38.2" y="20.5" width="4.4" height="0.7" fill="#8a8a8a" opacity="0.42"/><rect x="43.7" y="20.5" width="2.2" height="0.7" fill="#8a8a8a" opacity="0.42"/><rect x="47.0" y="20.5" width="5.3" height="0.7" fill="#8a8a8a" opacity="0.42"/><rect x="53.4" y="20.5" width="5.8" height="0.7" fill="#8a8a8a" opacity="0.42"/><rect x="60.4" y="20.5" width="1.6" height="0.7" fill="#8a8a8a" opacity="0.42"/><rect x="6.0" y="22.5" width="6.4" height="0.7" fill="#8a8a8a" opacity="0.42"/><rect x="13.5" y="22.5" width="3.6" height="0.7" fill="#8a8a8a" opacity="0.42"/><rect x="18.1" y="22.5" width="5.5" height="0.7" fill="#8a8a8a" opacity="0.42"/><rect x="24.7" y="22.5" width="5.0" height="0.7" fill="#8a8a8a" opacity="0.42"/><rect x="30.8" y="22.5" width="4.9" height="0.7" fill="#8a8a8a" opacity="0.42"/><rect x="10.0" y="26" width="4.3" height="0.7" fill="#8a8a8a" opacity="0.42"/><rect x="15.4" y="26" width="6.2" height="0.7" fill="#8a8a8a" opacity="0.42"/><rect x="22.7" y="26" width="6.7" height="0.7" fill="#8a8a8a" opacity="0.42"/><rect x="30.5" y="26" width="4.4" height="0.7" fill="#8a8a8a" opacity="0.42"/><rect x="36.0" y="26" width="5.3" height="0.7" fill="#8a8a8a" opacity="0.42"/><rect x="42.4" y="26" width="2.3" height="0.7" fill="#8a8a8a" opacity="0.42"/><rect x="45.8" y="26" width="5.5" height="0.7" fill="#8a8a8a" opacity="0.42"/><rect x="52.4" y="26" width="5.2" height="0.7" fill="#8a8a8a" opacity="0.42"/><rect x="58.7" y="26" width="3.3" height="0.7" fill="#8a8a8a" opacity="0.42"/><rect x="10.0" y="28" width="6.1" height="0.7" fill="#8a8a8a" opacity="0.42"/><rect x="17.2" y="28" width="3.4" height="0.7" fill="#8a8a8a" opacity="0.42"/><rect x="21.7" y="28" width="3.9" height="0.7" fill="#8a8a8a" opacity="0.42"/><rect x="26.8" y="28" width="5.3" height="0.7" fill="#8a8a8a" opacity="0.42"/><rect x="33.2" y="28" width="2.1" height="0.7" fill="#8a8a8a" opacity="0.42"/><rect x="36.4" y="28" width="4.3" height="0.7" fill="#8a8a8a" opacity="0.42"/><rect x="41.8" y="28" width="2.8" height="0.7" fill="#8a8a8a" opacity="0.42"/><rect x="45.8" y="28" width="2.6" height="0.7" fill="#8a8a8a" opacity="0.42"/><rect x="49.5" y="28" width="2.3" height="0.7" fill="#8a8a8a" opacity="0.42"/><rect x="52.8" y="28" width="5.8" height="0.7" fill="#8a8a8a" opacity="0.42"/><rect x="10.0" y="30.5" width="3.2" height="0.7" fill="#8a8a8a" opacity="0.42"/><rect x="14.3" y="30.5" width="4.0" height="0.7" fill="#8a8a8a" opacity="0.42"/><rect x="19.4" y="30.5" width="6.4" height="0.7" fill="#8a8a8a" opacity="0.42"/><rect x="26.8" y="30.5" width="2.4" height="0.7" fill="#8a8a8a" opacity="0.42"/><rect x="30.4" y="30.5" width="4.2" height="0.7" fill="#8a8a8a" opacity="0.42"/><rect x="35.7" y="30.5" width="4.7" height="0.7" fill="#8a8a8a" opacity="0.42"/><rect x="41.5" y="30.5" width="6.4" height="0.7" fill="#8a8a8a" opacity="0.42"/><rect x="49.1" y="30.5" width="6.1" height="0.7" fill="#8a8a8a" opacity="0.42"/><rect x="56.3" y="30.5" width="5.7" height="0.7" fill="#8a8a8a" opacity="0.42"/><rect x="10.0" y="32.5" width="3.4" height="0.7" fill="#8a8a8a" opacity="0.42"/><rect x="14.5" y="32.5" width="4.1" height="0.7" fill="#8a8a8a" opacity="0.42"/><rect x="19.7" y="32.5" width="3.8" height="0.7" fill="#8a8a8a" opacity="0.42"/><rect x="24.6" y="32.5" width="6.4" height="0.7" fill="#8a8a8a" opacity="0.42"/><rect x="32.1" y="32.5" width="1.9" height="0.7" fill="#8a8a8a" opacity="0.42"/></svg>
<div class="t" style="left:7px;top:178px;font-size:9.5px;color:#5a5a5a">16</div>
<div class="a" style="left:25.4px;top:181px;width:72px;height:41px;background:#fff;border-radius:3px;box-shadow:0 0 1.2px rgba(0,0,0,.35)"></div>
<svg class="a" style="left:25.4px;top:181px;" width="72" height="41" viewBox="0 0 72 41"><rect x="6.0" y="5.5" width="7.2" height="1.4" fill="#2a9a7a" opacity="0.6"/><rect x="14.8" y="5.5" width="7.4" height="1.4" fill="#2a9a7a" opacity="0.6"/><rect x="23.8" y="5.5" width="7.9" height="1.4" fill="#2a9a7a" opacity="0.6"/><rect x="33.3" y="5.5" width="7.9" height="1.4" fill="#2a9a7a" opacity="0.6"/><rect x="42.7" y="5.5" width="9.3" height="1.4" fill="#2a9a7a" opacity="0.6"/><rect x="6.0" y="12" width="4.9" height="0.8999999999999999" fill="#444" opacity="0.42"/><rect x="12.0" y="12" width="3.3" height="0.7" fill="#8a8a8a" opacity="0.42"/><rect x="16.5" y="12" width="2.0" height="0.7" fill="#8a8a8a" opacity="0.42"/><rect x="19.6" y="12" width="4.1" height="0.7" fill="#8a8a8a" opacity="0.42"/><rect x="24.8" y="12" width="3.8" height="0.7" fill="#8a8a8a" opacity="0.42"/><rect x="29.7" y="12" width="4.8" height="0.7" fill="#8a8a8a" opacity="0.42"/><rect x="35.7" y="12" width="6.8" height="0.7" fill="#8a8a8a" opacity="0.42"/><rect x="43.5" y="12" width="5.5" height="0.7" fill="#8a8a8a" opacity="0.42"/><rect x="50.1" y="12" width="4.6" height="0.7" fill="#8a8a8a" opacity="0.42"/><rect x="55.7" y="12" width="5.1" height="0.7" fill="#8a8a8a" opacity="0.42"/><rect x="61.9" y="12" width="2.1" height="0.7" fill="#8a8a8a" opacity="0.42"/><rect x="6.0" y="14" width="2.3" height="0.7" fill="#8a8a8a" opacity="0.42"/><rect x="9.4" y="14" width="6.5" height="0.7" fill="#8a8a8a" opacity="0.42"/><rect x="17.0" y="14" width="5.9" height="0.7" fill="#8a8a8a" opacity="0.42"/><rect x="24.0" y="14" width="6.4" height="0.7" fill="#8a8a8a" opacity="0.42"/><rect x="31.4" y="14" width="6.0" height="0.7" fill="#8a8a8a" opacity="0.42"/><rect x="38.5" y="14" width="4.0" height="0.7" fill="#8a8a8a" opacity="0.42"/><rect x="43.6" y="14" width="4.0" height="0.7" fill="#8a8a8a" opacity="0.42"/><rect x="48.7" y="14" width="2.5" height="0.7" fill="#8a8a8a" opacity="0.42"/><rect x="52.3" y="14" width="5.2" height="0.7" fill="#8a8a8a" opacity="0.42"/><rect x="58.6" y="14" width="2.3" height="0.7" fill="#8a8a8a" opacity="0.42"/><rect x="6.0" y="16" width="3.0" height="0.7" fill="#8a8a8a" opacity="0.42"/><rect x="10.1" y="16" width="2.8" height="0.7" fill="#8a8a8a" opacity="0.42"/><rect x="14.1" y="16" width="3.7" height="0.7" fill="#8a8a8a" opacity="0.42"/><rect x="18.9" y="16" width="2.3" height="0.7" fill="#8a8a8a" opacity="0.42"/><rect x="22.2" y="16" width="2.0" height="0.7" fill="#8a8a8a" opacity="0.42"/><rect x="25.3" y="16" width="2.8" height="0.7" fill="#8a8a8a" opacity="0.42"/><rect x="29.2" y="16" width="2.5" height="0.7" fill="#8a8a8a" opacity="0.42"/><rect x="32.8" y="16" width="3.8" height="0.7" fill="#8a8a8a" opacity="0.42"/><rect x="37.7" y="16" width="2.1" height="0.7" fill="#8a8a8a" opacity="0.42"/><rect x="40.9" y="16" width="6.4" height="0.7" fill="#8a8a8a" opacity="0.42"/><rect x="48.4" y="16" width="5.1" height="0.7" fill="#8a8a8a" opacity="0.42"/><rect x="54.6" y="16" width="1.4" height="0.7" fill="#8a8a8a" opacity="0.42"/><rect x="6.0" y="18.5" width="3.3" height="0.8999999999999999" fill="#444" opacity="0.42"/><rect x="10.4" y="18.5" width="3.7" height="0.7" fill="#8a8a8a" opacity="0.42"/><rect x="15.2" y="18.5" width="3.8" height="0.7" fill="#8a8a8a" opacity="0.42"/><rect x="20.1" y="18.5" width="2.6" height="0.7" fill="#8a8a8a" opacity="0.42"/><rect x="23.8" y="18.5" width="6.2" height="0.7" fill="#8a8a8a" opacity="0.42"/><rect x="31.2" y="18.5" width="7.0" height="0.7" fill="#8a8a8a" opacity="0.42"/><rect x="39.2" y="18.5" width="4.3" height="0.7" fill="#8a8a8a" opacity="0.42"/><rect x="44.7" y="18.5" width="4.4" height="0.7" fill="#8a8a8a" opacity="0.42"/><rect x="50.2" y="18.5" width="2.4" height="0.7" fill="#8a8a8a" opacity="0.42"/><rect x="53.7" y="18.5" width="2.5" height="0.7" fill="#8a8a8a" opacity="0.42"/><rect x="57.3" y="18.5" width="3.7" height="0.7" fill="#8a8a8a" opacity="0.42"/><rect x="62.1" y="18.5" width="1.9" height="0.7" fill="#8a8a8a" opacity="0.42"/><rect x="6.0" y="20.5" width="6.1" height="0.7" fill="#8a8a8a" opacity="0.42"/><rect x="13.2" y="20.5" width="2.8" height="0.7" fill="#8a8a8a" opacity="0.42"/><rect x="17.2" y="20.5" width="2.1" height="0.7" fill="#8a8a8a" opacity="0.42"/><rect x="20.4" y="20.5" width="6.8" height="0.7" fill="#8a8a8a" opacity="0.42"/><rect x="28.2" y="20.5" width="4.6" height="0.7" fill="#8a8a8a" opacity="0.42"/><rect x="34.0" y="20.5" width="2.7" height="0.7" fill="#8a8a8a" opacity="0.42"/><rect x="37.8" y="20.5" width="4.7" height="0.7" fill="#8a8a8a" opacity="0.42"/><rect x="43.6" y="20.5" width="2.1" height="0.7" fill="#8a8a8a" opacity="0.42"/><rect x="46.8" y="20.5" width="4.6" height="0.7" fill="#8a8a8a" opacity="0.42"/><rect x="52.6" y="20.5" width="6.9" height="0.7" fill="#8a8a8a" opacity="0.42"/><rect x="60.6" y="20.5" width="1.4" height="0.7" fill="#8a8a8a" opacity="0.42"/><rect x="6.0" y="22.5" width="5.5" height="0.7" fill="#8a8a8a" opacity="0.42"/><rect x="12.6" y="22.5" width="3.3" height="0.7" fill="#8a8a8a" opacity="0.42"/><rect x="17.0" y="22.5" width="3.8" height="0.7" fill="#8a8a8a" opacity="0.42"/><rect x="21.9" y="22.5" width="2.8" height="0.7" fill="#8a8a8a" opacity="0.42"/><rect x="25.9" y="22.5" width="5.9" height="0.7" fill="#8a8a8a" opacity="0.42"/><rect x="32.8" y="22.5" width="3.2" height="0.7" fill="#8a8a8a" opacity="0.42"/><rect x="10.0" y="26" width="5.9" height="0.7" fill="#8a8a8a" opacity="0.42"/><rect x="17.0" y="26" width="3.6" height="0.7" fill="#8a8a8a" opacity="0.42"/><rect x="21.7" y="26" width="3.1" height="0.7" fill="#8a8a8a" opacity="0.42"/><rect x="26.0" y="26" width="6.1" height="0.7" fill="#8a8a8a" opacity="0.42"/><rect x="33.1" y="26" width="6.9" height="0.7" fill="#8a8a8a" opacity="0.42"/><rect x="41.1" y="26" width="6.3" height="0.7" fill="#8a8a8a" opacity="0.42"/><rect x="48.5" y="26" width="6.0" height="0.7" fill="#8a8a8a" opacity="0.42"/><rect x="55.6" y="26" width="6.1" height="0.7" fill="#8a8a8a" opacity="0.42"/><rect x="10.0" y="28" width="5.7" height="0.7" fill="#8a8a8a" opacity="0.42"/><rect x="16.8" y="28" width="3.1" height="0.7" fill="#8a8a8a" opacity="0.42"/><rect x="21.0" y="28" width="4.6" height="0.7" fill="#8a8a8a" opacity="0.42"/><rect x="26.7" y="28" width="3.8" height="0.7" fill="#8a8a8a" opacity="0.42"/><rect x="31.6" y="28" width="2.1" height="0.7" fill="#8a8a8a" opacity="0.42"/><rect x="34.8" y="28" width="2.1" height="0.7" fill="#8a8a8a" opacity="0.42"/><rect x="38.1" y="28" width="3.4" height="0.7" fill="#8a8a8a" opacity="0.42"/><rect x="42.6" y="28" width="3.3" height="0.7" fill="#8a8a8a" opacity="0.42"/><rect x="47.0" y="28" width="5.5" height="0.7" fill="#8a8a8a" opacity="0.42"/><rect x="53.5" y="28" width="6.5" height="0.7" fill="#8a8a8a" opacity="0.42"/><rect x="10.0" y="30.5" width="4.2" height="0.7" fill="#8a8a8a" opacity="0.42"/><rect x="15.3" y="30.5" width="6.7" height="0.7" fill="#8a8a8a" opacity="0.42"/><rect x="23.1" y="30.5" width="6.9" height="0.7" fill="#8a8a8a" opacity="0.42"/><rect x="31.2" y="30.5" width="6.8" height="0.7" fill="#8a8a8a" opacity="0.42"/><rect x="39.0" y="30.5" width="3.8" height="0.7" fill="#8a8a8a" opacity="0.42"/><rect x="44.0" y="30.5" width="3.1" height="0.7" fill="#8a8a8a" opacity="0.42"/><rect x="48.2" y="30.5" width="3.1" height="0.7" fill="#8a8a8a" opacity="0.42"/><rect x="52.4" y="30.5" width="3.0" height="0.7" fill="#8a8a8a" opacity="0.42"/><rect x="56.5" y="30.5" width="3.0" height="0.7" fill="#8a8a8a" opacity="0.42"/><rect x="60.6" y="30.5" width="1.4" height="0.7" fill="#8a8a8a" opacity="0.42"/><rect x="10.0" y="32.5" width="6.5" height="0.7" fill="#8a8a8a" opacity="0.42"/><rect x="17.6" y="32.5" width="6.2" height="0.7" fill="#8a8a8a" opacity="0.42"/><rect x="24.9" y="32.5" width="4.4" height="0.7" fill="#8a8a8a" opacity="0.42"/><rect x="30.4" y="32.5" width="3.6" height="0.7" fill="#8a8a8a" opacity="0.42"/></svg>
<div class="t" style="left:7px;top:231.5px;font-size:9.5px;color:#5a5a5a">17</div>
<div class="a" style="left:25.4px;top:234.5px;width:72px;height:41px;background:#fff;border-radius:3px;box-shadow:0 0 1.2px rgba(0,0,0,.35)"></div>
<svg class="a" style="left:25.4px;top:234.5px;" width="72" height="41" viewBox="0 0 72 41"><rect x="6.0" y="5.5" width="12.4" height="1.4" fill="#2a9a7a" opacity="0.6"/><rect x="20.0" y="5.5" width="6.7" height="1.4" fill="#2a9a7a" opacity="0.6"/><rect x="28.3" y="5.5" width="11.3" height="1.4" fill="#2a9a7a" opacity="0.6"/><rect x="41.2" y="5.5" width="10.8" height="1.4" fill="#2a9a7a" opacity="0.6"/><rect x="6.0" y="10" width="5.9" height="0.8999999999999999" fill="#444" opacity="0.42"/><rect x="13.0" y="10" width="5.8" height="0.7" fill="#8a8a8a" opacity="0.42"/><rect x="19.9" y="10" width="4.4" height="0.7" fill="#8a8a8a" opacity="0.42"/><rect x="25.4" y="10" width="2.9" height="0.7" fill="#8a8a8a" opacity="0.42"/><rect x="29.3" y="10" width="5.9" height="0.7" fill="#8a8a8a" opacity="0.42"/><rect x="36.4" y="10" width="3.7" height="0.7" fill="#8a8a8a" opacity="0.42"/><rect x="41.2" y="10" width="6.0" height="0.7" fill="#8a8a8a" opacity="0.42"/><rect x="48.3" y="10" width="6.9" height="0.7" fill="#8a8a8a" opacity="0.42"/><rect x="56.2" y="10" width="4.0" height="0.7" fill="#8a8a8a" opacity="0.42"/><rect x="61.3" y="10" width="2.7" height="0.7" fill="#8a8a8a" opacity="0.42"/><rect x="6.0" y="12" width="6.7" height="0.7" fill="#8a8a8a" opacity="0.42"/><rect x="13.8" y="12" width="5.6" height="0.7" fill="#8a8a8a" opacity="0.42"/><rect x="20.6" y="12" width="2.9" height="0.7" fill="#8a8a8a" opacity="0.42"/><rect x="24.5" y="12" width="2.6" height="0.7" fill="#8a8a8a" opacity="0.42"/><rect x="28.2" y="12" width="2.8" height="0.7" fill="#8a8a8a" opacity="0.42"/><rect x="32.1" y="12" width="6.5" height="0.7" fill="#8a8a8a" opacity="0.42"/><rect x="39.7" y="12" width="6.0" height="0.7" fill="#8a8a8a" opacity="0.42"/><rect x="46.9" y="12" width="2.7" height="0.7" fill="#8a8a8a" opacity="0.42"/><rect x="50.7" y="12" width="6.1" height="0.7" fill="#8a8a8a" opacity="0.42"/><rect x="57.9" y="12" width="6.1" height="0.7" fill="#8a8a8a" opacity="0.42"/><rect x="6.0" y="14.2" width="5.3" height="0.7" fill="#8a8a8a" opacity="0.42"/><rect x="12.4" y="14.2" width="3.8" height="0.7" fill="#8a8a8a" opacity="0.42"/><rect x="17.2" y="14.2" width="4.7" height="0.7" fill="#8a8a8a" opacity="0.42"/><rect x="23.1" y="14.2" width="2.7" height="0.7" fill="#8a8a8a" opacity="0.42"/><rect x="26.8" y="14.2" width="2.1" height="0.7" fill="#8a8a8a" opacity="0.42"/><rect x="30.0" y="14.2" width="6.9" height="0.7" fill="#8a8a8a" opacity="0.42"/><rect x="38.0" y="14.2" width="5.2" height="0.7" fill="#8a8a8a" opacity="0.42"/><rect x="44.3" y="14.2" width="4.6" height="0.7" fill="#8a8a8a" opacity="0.42"/><rect x="50.0" y="14.2" width="6.7" height="0.7" fill="#8a8a8a" opacity="0.42"/><rect x="57.8" y="14.2" width="4.2" height="0.7" fill="#8a8a8a" opacity="0.42"/><rect x="6.0" y="16.4" width="6.4" height="0.7" fill="#8a8a8a" opacity="0.42"/><rect x="13.5" y="16.4" width="6.1" height="0.7" fill="#8a8a8a" opacity="0.42"/><rect x="20.7" y="16.4" width="3.1" height="0.7" fill="#8a8a8a" opacity="0.42"/><rect x="24.8" y="16.4" width="3.3" height="0.7" fill="#8a8a8a" opacity="0.42"/><rect x="29.2" y="16.4" width="3.5" height="0.7" fill="#8a8a8a" opacity="0.42"/><rect x="33.8" y="16.4" width="3.2" height="0.7" fill="#8a8a8a" opacity="0.42"/><rect x="38.1" y="16.4" width="4.9" height="0.7" fill="#8a8a8a" opacity="0.42"/><rect x="44.1" y="16.4" width="3.3" height="0.7" fill="#8a8a8a" opacity="0.42"/><rect x="48.5" y="16.4" width="4.1" height="0.7" fill="#8a8a8a" opacity="0.42"/><rect x="53.7" y="16.4" width="2.7" height="0.7" fill="#8a8a8a" opacity="0.42"/><rect x="57.5" y="16.4" width="6.5" height="0.7" fill="#8a8a8a" opacity="0.42"/><rect x="6.0" y="18.6" width="3.8" height="0.7" fill="#8a8a8a" opacity="0.42"/><rect x="10.9" y="18.6" width="4.3" height="0.7" fill="#8a8a8a" opacity="0.42"/><rect x="16.3" y="18.6" width="4.9" height="0.7" fill="#8a8a8a" opacity="0.42"/><rect x="22.3" y="18.6" width="6.5" height="0.7" fill="#8a8a8a" opacity="0.42"/><rect x="29.9" y="18.6" width="4.1" height="0.7" fill="#8a8a8a" opacity="0.42"/><rect x="35.1" y="18.6" width="6.6" height="0.7" fill="#8a8a8a" opacity="0.42"/><rect x="42.8" y="18.6" width="4.5" height="0.7" fill="#8a8a8a" opacity="0.42"/><rect x="48.4" y="18.6" width="4.7" height="0.7" fill="#8a8a8a" opacity="0.42"/><rect x="54.2" y="18.6" width="4.6" height="0.7" fill="#8a8a8a" opacity="0.42"/><rect x="59.9" y="18.6" width="2.1" height="0.7" fill="#8a8a8a" opacity="0.42"/><rect x="6.0" y="20.8" width="2.9" height="0.7" fill="#8a8a8a" opacity="0.42"/><rect x="10.0" y="20.8" width="2.0" height="0.7" fill="#8a8a8a" opacity="0.42"/><rect x="13.1" y="20.8" width="6.0" height="0.7" fill="#8a8a8a" opacity="0.42"/><rect x="20.2" y="20.8" width="2.9" height="0.7" fill="#8a8a8a" opacity="0.42"/><rect x="24.2" y="20.8" width="4.4" height="0.7" fill="#8a8a8a" opacity="0.42"/><rect x="29.7" y="20.8" width="5.6" height="0.7" fill="#8a8a8a" opacity="0.42"/><rect x="36.4" y="20.8" width="4.8" height="0.7" fill="#8a8a8a" opacity="0.42"/><rect x="42.3" y="20.8" width="3.6" height="0.7" fill="#8a8a8a" opacity="0.42"/><rect x="47.0" y="20.8" width="4.6" height="0.7" fill="#8a8a8a" opacity="0.42"/><rect x="52.7" y="20.8" width="4.8" height="0.7" fill="#8a8a8a" opacity="0.42"/><rect x="58.6" y="20.8" width="5.4" height="0.7" fill="#8a8a8a" opacity="0.42"/><rect x="6.0" y="23" width="2.5" height="0.7" fill="#8a8a8a" opacity="0.42"/><rect x="9.6" y="23" width="4.8" height="0.7" fill="#8a8a8a" opacity="0.42"/><rect x="15.5" y="23" width="3.2" height="0.7" fill="#8a8a8a" opacity="0.42"/><rect x="19.9" y="23" width="3.4" height="0.7" fill="#8a8a8a" opacity="0.42"/><rect x="24.4" y="23" width="5.9" height="0.7" fill="#8a8a8a" opacity="0.42"/><rect x="31.3" y="23" width="4.5" height="0.7" fill="#8a8a8a" opacity="0.42"/><rect x="37.0" y="23" width="4.8" height="0.7" fill="#8a8a8a" opacity="0.42"/><rect x="42.9" y="23" width="5.8" height="0.7" fill="#8a8a8a" opacity="0.42"/><rect x="49.8" y="23" width="6.6" height="0.7" fill="#8a8a8a" opacity="0.42"/><rect x="57.4" y="23" width="2.6" height="0.7" fill="#8a8a8a" opacity="0.42"/><rect x="6.0" y="25.2" width="5.1" height="0.7" fill="#8a8a8a" opacity="0.42"/><rect x="12.2" y="25.2" width="4.5" height="0.7" fill="#8a8a8a" opacity="0.42"/><rect x="17.8" y="25.2" width="4.6" height="0.7" fill="#8a8a8a" opacity="0.42"/><rect x="23.5" y="25.2" width="5.5" height="0.7" fill="#8a8a8a" opacity="0.42"/><rect x="30.0" y="25.2" width="4.3" height="0.7" fill="#8a8a8a" opacity="0.42"/><rect x="35.4" y="25.2" width="4.7" height="0.7" fill="#8a8a8a" opacity="0.42"/><rect x="41.1" y="25.2" width="4.4" height="0.7" fill="#8a8a8a" opacity="0.42"/><rect x="6.0" y="27.8" width="6.7" height="0.7" fill="#8a8a8a" opacity="0.42"/><rect x="13.8" y="27.8" width="5.5" height="0.7" fill="#8a8a8a" opacity="0.42"/><rect x="20.4" y="27.8" width="6.4" height="0.7" fill="#8a8a8a" opacity="0.42"/><rect x="27.9" y="27.8" width="6.7" height="0.7" fill="#8a8a8a" opacity="0.42"/><rect x="35.7" y="27.8" width="3.3" height="0.7" fill="#8a8a8a" opacity="0.42"/><rect x="40.1" y="27.8" width="4.8" height="0.7" fill="#8a8a8a" opacity="0.42"/><rect x="46.0" y="27.8" width="6.7" height="0.7" fill="#8a8a8a" opacity="0.42"/><rect x="53.8" y="27.8" width="6.2" height="0.7" fill="#8a8a8a" opacity="0.42"/><rect x="61.1" y="27.8" width="2.7" height="0.7" fill="#8a8a8a" opacity="0.42"/><rect x="6.0" y="30" width="2.6" height="0.7" fill="#8a8a8a" opacity="0.42"/><rect x="9.7" y="30" width="4.2" height="0.7" fill="#8a8a8a" opacity="0.42"/><rect x="15.0" y="30" width="2.4" height="0.7" fill="#8a8a8a" opacity="0.42"/><rect x="18.5" y="30" width="3.2" height="0.7" fill="#8a8a8a" opacity="0.42"/><rect x="22.8" y="30" width="2.4" height="0.7" fill="#8a8a8a" opacity="0.42"/><rect x="26.3" y="30" width="5.3" height="0.7" fill="#8a8a8a" opacity="0.42"/><rect x="32.7" y="30" width="5.9" height="0.7" fill="#8a8a8a" opacity="0.42"/><rect x="39.7" y="30" width="6.5" height="0.7" fill="#8a8a8a" opacity="0.42"/><rect x="47.3" y="30" width="2.8" height="0.7" fill="#8a8a8a" opacity="0.42"/><rect x="51.2" y="30" width="5.6" height="0.7" fill="#8a8a8a" opacity="0.42"/><rect x="57.9" y="30" width="5.3" height="0.7" fill="#8a8a8a" opacity="0.42"/><rect x="6.0" y="32.2" width="2.7" height="0.7" fill="#8a8a8a" opacity="0.42"/><rect x="9.8" y="32.2" width="6.4" height="0.7" fill="#8a8a8a" opacity="0.42"/><rect x="17.3" y="32.2" width="6.8" height="0.7" fill="#8a8a8a" opacity="0.42"/><rect x="25.3" y="32.2" width="3.1" height="0.7" fill="#8a8a8a" opacity="0.42"/><rect x="29.5" y="32.2" width="6.8" height="0.7" fill="#8a8a8a" opacity="0.42"/><rect x="37.3" y="32.2" width="4.0" height="0.7" fill="#8a8a8a" opacity="0.42"/><rect x="42.4" y="32.2" width="3.6" height="0.7" fill="#8a8a8a" opacity="0.42"/></svg>
<div class="t" style="left:7px;top:285px;font-size:9.5px;color:#5a5a5a">18</div>
<div class="a" style="left:25.4px;top:288px;width:72px;height:41px;background:#fff;border-radius:3px;box-shadow:0 0 1.2px rgba(0,0,0,.35)"></div>
<svg class="a" style="left:25.4px;top:288px;" width="72" height="41" viewBox="0 0 72 41"><rect x="6.0" y="5.5" width="13.9" height="1.4" fill="#2a9a7a" opacity="0.6"/><rect x="21.5" y="5.5" width="12.7" height="1.4" fill="#2a9a7a" opacity="0.6"/><rect x="35.8" y="5.5" width="7.3" height="1.4" fill="#2a9a7a" opacity="0.6"/><rect x="44.7" y="5.5" width="7.3" height="1.4" fill="#2a9a7a" opacity="0.6"/><rect x="6.0" y="10" width="4.6" height="0.8999999999999999" fill="#444" opacity="0.42"/><rect x="11.7" y="10" width="3.7" height="0.7" fill="#8a8a8a" opacity="0.42"/><rect x="16.5" y="10" width="3.0" height="0.7" fill="#8a8a8a" opacity="0.42"/><rect x="20.6" y="10" width="3.6" height="0.7" fill="#8a8a8a" opacity="0.42"/><rect x="25.2" y="10" width="5.6" height="0.7" fill="#8a8a8a" opacity="0.42"/><rect x="32.0" y="10" width="2.1" height="0.7" fill="#8a8a8a" opacity="0.42"/><rect x="35.2" y="10" width="4.8" height="0.7" fill="#8a8a8a" opacity="0.42"/><rect x="41.0" y="10" width="4.2" height="0.7" fill="#8a8a8a" opacity="0.42"/><rect x="46.3" y="10" width="2.1" height="0.7" fill="#8a8a8a" opacity="0.42"/><rect x="49.5" y="10" width="3.7" height="0.7" fill="#8a8a8a" opacity="0.42"/><rect x="54.3" y="10" width="5.1" height="0.7" fill="#8a8a8a" opacity="0.42"/><rect x="60.5" y="10" width="3.5" height="0.7" fill="#8a8a8a" opacity="0.42"/><rect x="6.0" y="12" width="2.3" height="0.7" fill="#8a8a8a" opacity="0.42"/><rect x="9.4" y="12" width="6.9" height="0.7" fill="#8a8a8a" opacity="0.42"/><rect x="17.4" y="12" width="5.9" height="0.7" fill="#8a8a8a" opacity="0.42"/><rect x="24.5" y="12" width="6.9" height="0.7" fill="#8a8a8a" opacity="0.42"/><rect x="32.4" y="12" width="2.5" height="0.7" fill="#8a8a8a" opacity="0.42"/><rect x="36.1" y="12" width="3.3" height="0.7" fill="#8a8a8a" opacity="0.42"/><rect x="40.5" y="12" width="2.2" height="0.7" fill="#8a8a8a" opacity="0.42"/><rect x="43.8" y="12" width="5.9" height="0.7" fill="#8a8a8a" opacity="0.42"/><rect x="50.8" y="12" width="3.4" height="0.7" fill="#8a8a8a" opacity="0.42"/><rect x="55.2" y="12" width="2.6" height="0.7" fill="#8a8a8a" opacity="0.42"/><rect x="59.0" y="12" width="4.1" height="0.7" fill="#8a8a8a" opacity="0.42"/><rect x="6.0" y="14.2" width="6.6" height="0.7" fill="#8a8a8a" opacity="0.42"/><rect x="13.7" y="14.2" width="6.1" height="0.7" fill="#8a8a8a" opacity="0.42"/><rect x="20.9" y="14.2" width="3.3" height="0.7" fill="#8a8a8a" opacity="0.42"/><rect x="25.2" y="14.2" width="2.7" height="0.7" fill="#8a8a8a" opacity="0.42"/><rect x="29.1" y="14.2" width="6.6" height="0.7" fill="#8a8a8a" opacity="0.42"/><rect x="36.8" y="14.2" width="4.9" height="0.7" fill="#8a8a8a" opacity="0.42"/><rect x="42.7" y="14.2" width="5.5" height="0.7" fill="#8a8a8a" opacity="0.42"/><rect x="49.3" y="14.2" width="2.4" height="0.7" fill="#8a8a8a" opacity="0.42"/><rect x="52.9" y="14.2" width="2.3" height="0.7" fill="#8a8a8a" opacity="0.42"/><rect x="56.3" y="14.2" width="5.4" height="0.7" fill="#8a8a8a" opacity="0.42"/><rect x="6.0" y="16.4" width="4.1" height="0.7" fill="#8a8a8a" opacity="0.42"/><rect x="11.2" y="16.4" width="2.4" height="0.7" fill="#8a8a8a" opacity="0.42"/><rect x="14.7" y="16.4" width="6.7" height="0.7" fill="#8a8a8a" opacity="0.42"/><rect x="22.5" y="16.4" width="5.2" height="0.7" fill="#8a8a8a" opacity="0.42"/><rect x="28.8" y="16.4" width="6.0" height="0.7" fill="#8a8a8a" opacity="0.42"/><rect x="35.9" y="16.4" width="2.4" height="0.7" fill="#8a8a8a" opacity="0.42"/><rect x="39.4" y="16.4" width="6.3" height="0.7" fill="#8a8a8a" opacity="0.42"/><rect x="46.8" y="16.4" width="2.3" height="0.7" fill="#8a8a8a" opacity="0.42"/><rect x="50.2" y="16.4" width="6.3" height="0.7" fill="#8a8a8a" opacity="0.42"/><rect x="57.6" y="16.4" width="4.3" height="0.7" fill="#8a8a8a" opacity="0.42"/><rect x="63.0" y="16.4" width="1.0" height="0.7" fill="#8a8a8a" opacity="0.42"/><rect x="6.0" y="18.6" width="4.8" height="0.7" fill="#8a8a8a" opacity="0.42"/><rect x="11.9" y="18.6" width="6.6" height="0.7" fill="#8a8a8a" opacity="0.42"/><rect x="19.6" y="18.6" width="3.3" height="0.7" fill="#8a8a8a" opacity="0.42"/><rect x="24.0" y="18.6" width="2.6" height="0.7" fill="#8a8a8a" opacity="0.42"/><rect x="27.8" y="18.6" width="4.6" height="0.7" fill="#8a8a8a" opacity="0.42"/><rect x="33.5" y="18.6" width="3.2" height="0.7" fill="#8a8a8a" opacity="0.42"/><rect x="37.8" y="18.6" width="2.5" height="0.7" fill="#8a8a8a" opacity="0.42"/><rect x="41.5" y="18.6" width="2.8" height="0.7" fill="#8a8a8a" opacity="0.42"/><rect x="45.4" y="18.6" width="2.3" height="0.7" fill="#8a8a8a" opacity="0.42"/><rect x="48.7" y="18.6" width="3.0" height="0.7" fill="#8a8a8a" opacity="0.42"/><rect x="52.8" y="18.6" width="3.6" height="0.7" fill="#8a8a8a" opacity="0.42"/><rect x="57.5" y="18.6" width="3.5" height="0.7" fill="#8a8a8a" opacity="0.42"/><rect x="62.1" y="18.6" width="1.9" height="0.7" fill="#8a8a8a" opacity="0.42"/><rect x="6.0" y="20.8" width="3.4" height="0.7" fill="#8a8a8a" opacity="0.42"/><rect x="10.5" y="20.8" width="4.5" height="0.7" fill="#8a8a8a" opacity="0.42"/><rect x="16.2" y="20.8" width="2.9" height="0.7" fill="#8a8a8a" opacity="0.42"/><rect x="20.1" y="20.8" width="3.7" height="0.7" fill="#8a8a8a" opacity="0.42"/><rect x="25.0" y="20.8" width="2.1" height="0.7" fill="#8a8a8a" opacity="0.42"/><rect x="28.2" y="20.8" width="3.3" height="0.7" fill="#8a8a8a" opacity="0.42"/><rect x="32.5" y="20.8" width="2.1" height="0.7" fill="#8a8a8a" opacity="0.42"/><rect x="35.7" y="20.8" width="5.7" height="0.7" fill="#8a8a8a" opacity="0.42"/><rect x="42.5" y="20.8" width="4.8" height="0.7" fill="#8a8a8a" opacity="0.42"/><rect x="48.3" y="20.8" width="2.9" height="0.7" fill="#8a8a8a" opacity="0.42"/><rect x="52.4" y="20.8" width="4.4" height="0.7" fill="#8a8a8a" opacity="0.42"/><rect x="57.8" y="20.8" width="6.2" height="0.7" fill="#8a8a8a" opacity="0.42"/><rect x="6.0" y="23" width="2.5" height="0.7" fill="#8a8a8a" opacity="0.42"/><rect x="9.6" y="23" width="6.1" height="0.7" fill="#8a8a8a" opacity="0.42"/><rect x="16.8" y="23" width="4.2" height="0.7" fill="#8a8a8a" opacity="0.42"/><rect x="22.1" y="23" width="4.5" height="0.7" fill="#8a8a8a" opacity="0.42"/><rect x="27.7" y="23" width="6.2" height="0.7" fill="#8a8a8a" opacity="0.42"/><rect x="34.9" y="23" width="4.0" height="0.7" fill="#8a8a8a" opacity="0.42"/><rect x="40.0" y="23" width="4.5" height="0.7" fill="#8a8a8a" opacity="0.42"/><rect x="45.6" y="23" width="5.4" height="0.7" fill="#8a8a8a" opacity="0.42"/><rect x="52.2" y="23" width="6.9" height="0.7" fill="#8a8a8a" opacity="0.42"/><rect x="6.0" y="25.2" width="3.7" height="0.7" fill="#8a8a8a" opacity="0.42"/><rect x="10.8" y="25.2" width="6.2" height="0.7" fill="#8a8a8a" opacity="0.42"/><rect x="18.1" y="25.2" width="5.5" height="0.7" fill="#8a8a8a" opacity="0.42"/><rect x="24.7" y="25.2" width="5.2" height="0.7" fill="#8a8a8a" opacity="0.42"/><rect x="31.0" y="25.2" width="4.0" height="0.7" fill="#8a8a8a" opacity="0.42"/><rect x="36.1" y="25.2" width="3.7" height="0.7" fill="#8a8a8a" opacity="0.42"/><rect x="40.9" y="25.2" width="2.3" height="0.7" fill="#8a8a8a" opacity="0.42"/><rect x="44.3" y="25.2" width="1.7" height="0.7" fill="#8a8a8a" opacity="0.42"/><rect x="6.0" y="27.8" width="2.4" height="0.7" fill="#8a8a8a" opacity="0.42"/><rect x="9.5" y="27.8" width="5.7" height="0.7" fill="#8a8a8a" opacity="0.42"/><rect x="16.3" y="27.8" width="3.3" height="0.7" fill="#8a8a8a" opacity="0.42"/><rect x="20.6" y="27.8" width="2.8" height="0.7" fill="#8a8a8a" opacity="0.42"/><rect x="24.6" y="27.8" width="2.4" height="0.7" fill="#8a8a8a" opacity="0.42"/><rect x="28.1" y="27.8" width="6.2" height="0.7" fill="#8a8a8a" opacity="0.42"/><rect x="35.4" y="27.8" width="6.4" height="0.7" fill="#8a8a8a" opacity="0.42"/><rect x="42.8" y="27.8" width="5.4" height="0.7" fill="#8a8a8a" opacity="0.42"/><rect x="49.3" y="27.8" width="3.4" height="0.7" fill="#8a8a8a" opacity="0.42"/><rect x="53.8" y="27.8" width="3.2" height="0.7" fill="#8a8a8a" opacity="0.42"/><rect x="58.1" y="27.8" width="3.5" height="0.7" fill="#8a8a8a" opacity="0.42"/><rect x="62.7" y="27.8" width="1.3" height="0.7" fill="#8a8a8a" opacity="0.42"/><rect x="6.0" y="30" width="2.8" height="0.7" fill="#8a8a8a" opacity="0.42"/><rect x="9.9" y="30" width="4.2" height="0.7" fill="#8a8a8a" opacity="0.42"/><rect x="15.2" y="30" width="3.3" height="0.7" fill="#8a8a8a" opacity="0.42"/><rect x="19.6" y="30" width="6.8" height="0.7" fill="#8a8a8a" opacity="0.42"/><rect x="27.5" y="30" width="6.9" height="0.7" fill="#8a8a8a" opacity="0.42"/><rect x="35.5" y="30" width="4.7" height="0.7" fill="#8a8a8a" opacity="0.42"/><rect x="41.3" y="30" width="3.2" height="0.7" fill="#8a8a8a" opacity="0.42"/><rect x="45.7" y="30" width="6.8" height="0.7" fill="#8a8a8a" opacity="0.42"/><rect x="53.6" y="30" width="3.5" height="0.7" fill="#8a8a8a" opacity="0.42"/><rect x="58.2" y="30" width="3.8" height="0.7" fill="#8a8a8a" opacity="0.42"/><rect x="6.0" y="32.2" width="3.9" height="0.7" fill="#8a8a8a" opacity="0.42"/><rect x="11.0" y="32.2" width="4.4" height="0.7" fill="#8a8a8a" opacity="0.42"/><rect x="16.5" y="32.2" width="4.5" height="0.7" fill="#8a8a8a" opacity="0.42"/><rect x="22.1" y="32.2" width="3.0" height="0.7" fill="#8a8a8a" opacity="0.42"/><rect x="26.2" y="32.2" width="4.5" height="0.7" fill="#8a8a8a" opacity="0.42"/><rect x="31.8" y="32.2" width="2.0" height="0.7" fill="#8a8a8a" opacity="0.42"/><rect x="34.9" y="32.2" width="3.3" height="0.7" fill="#8a8a8a" opacity="0.42"/><rect x="39.4" y="32.2" width="2.4" height="0.7" fill="#8a8a8a" opacity="0.42"/><rect x="42.9" y="32.2" width="3.1" height="0.7" fill="#8a8a8a" opacity="0.42"/></svg>
<div class="t" style="left:7px;top:338.5px;font-size:9.5px;color:#5a5a5a">19</div>
<div class="a" style="left:25.4px;top:341.5px;width:72px;height:41px;background:#fff;border-radius:3px;box-shadow:0 0 1.2px rgba(0,0,0,.35)"></div>
<svg class="a" style="left:25.4px;top:341.5px;" width="72" height="41" viewBox="0 0 72 41"><rect x="6.0" y="4" width="6.3" height="1.4" fill="#2a9a7a" opacity="0.6"/><rect x="13.9" y="4" width="6.2" height="1.4" fill="#2a9a7a" opacity="0.6"/><rect x="21.7" y="4" width="8.4" height="1.4" fill="#2a9a7a" opacity="0.6"/><rect x="31.7" y="4" width="7.9" height="1.4" fill="#2a9a7a" opacity="0.6"/><rect x="41.2" y="4" width="10.7" height="1.4" fill="#2a9a7a" opacity="0.6"/><rect x="53.5" y="4" width="6.5" height="1.4" fill="#2a9a7a" opacity="0.6"/><rect x="6.0" y="7.5" width="12.0" height="1.4" fill="#2a9a7a" opacity="0.6"/><rect x="19.6" y="7.5" width="6.4" height="1.4" fill="#2a9a7a" opacity="0.6"/><rect x="9.0" y="11" width="5.6" height="0.7" fill="#4a9a80" opacity="0.6"/><rect x="15.7" y="11" width="6.4" height="0.7" fill="#4a9a80" opacity="0.6"/><rect x="23.2" y="11" width="3.9" height="0.7" fill="#4a9a80" opacity="0.6"/><rect x="28.2" y="11" width="3.6" height="0.7" fill="#4a9a80" opacity="0.6"/><rect x="33.0" y="11" width="6.9" height="0.7" fill="#4a9a80" opacity="0.6"/><rect x="41.0" y="11" width="2.7" height="0.7" fill="#4a9a80" opacity="0.6"/><rect x="44.8" y="11" width="5.6" height="0.7" fill="#4a9a80" opacity="0.6"/><rect x="51.5" y="11" width="5.2" height="0.7" fill="#4a9a80" opacity="0.6"/><rect x="57.9" y="11" width="2.2" height="0.7" fill="#4a9a80" opacity="0.6"/><rect x="9.0" y="12.5" width="6.2" height="0.7" fill="#4a9a80" opacity="0.6"/><rect x="16.3" y="12.5" width="6.5" height="0.7" fill="#4a9a80" opacity="0.6"/><rect x="23.8" y="12.5" width="5.1" height="0.7" fill="#4a9a80" opacity="0.6"/><rect x="30.1" y="12.5" width="5.7" height="0.7" fill="#4a9a80" opacity="0.6"/><rect x="36.8" y="12.5" width="6.1" height="0.7" fill="#4a9a80" opacity="0.6"/><rect x="44.0" y="12.5" width="2.7" height="0.7" fill="#4a9a80" opacity="0.6"/><rect x="47.8" y="12.5" width="4.6" height="0.7" fill="#4a9a80" opacity="0.6"/><rect x="9.0" y="14.5" width="4.5" height="0.7" fill="#4a9a80" opacity="0.6"/><rect x="14.6" y="14.5" width="6.2" height="0.7" fill="#4a9a80" opacity="0.6"/><rect x="21.9" y="14.5" width="6.0" height="0.7" fill="#4a9a80" opacity="0.6"/><rect x="29.0" y="14.5" width="6.1" height="0.7" fill="#4a9a80" opacity="0.6"/><rect x="36.3" y="14.5" width="4.9" height="0.7" fill="#4a9a80" opacity="0.6"/><rect x="42.3" y="14.5" width="2.7" height="0.7" fill="#4a9a80" opacity="0.6"/><rect x="16.0" y="16.5" width="5.4" height="0.7" fill="#4a9a80" opacity="0.6"/><rect x="22.5" y="16.5" width="5.5" height="0.7" fill="#4a9a80" opacity="0.6"/><rect x="29.1" y="16.5" width="3.1" height="0.7" fill="#4a9a80" opacity="0.6"/><rect x="33.3" y="16.5" width="2.2" height="0.7" fill="#4a9a80" opacity="0.6"/><rect x="36.6" y="16.5" width="2.7" height="0.7" fill="#4a9a80" opacity="0.6"/><rect x="40.4" y="16.5" width="3.8" height="0.7" fill="#4a9a80" opacity="0.6"/><rect x="45.3" y="16.5" width="2.5" height="0.7" fill="#4a9a80" opacity="0.6"/><rect x="48.9" y="16.5" width="6.2" height="0.7" fill="#4a9a80" opacity="0.6"/><rect x="16.0" y="18.5" width="4.8" height="0.7" fill="#4a9a80" opacity="0.6"/><rect x="21.9" y="18.5" width="5.1" height="0.7" fill="#4a9a80" opacity="0.6"/><rect x="28.1" y="18.5" width="5.1" height="0.7" fill="#4a9a80" opacity="0.6"/><rect x="34.4" y="18.5" width="5.4" height="0.7" fill="#4a9a80" opacity="0.6"/><rect x="40.9" y="18.5" width="4.4" height="0.7" fill="#4a9a80" opacity="0.6"/><rect x="46.4" y="18.5" width="2.0" height="0.7" fill="#4a9a80" opacity="0.6"/><rect x="49.5" y="18.5" width="2.5" height="0.7" fill="#4a9a80" opacity="0.6"/><rect x="16.0" y="20.5" width="5.7" height="0.7" fill="#4a9a80" opacity="0.6"/><rect x="22.8" y="20.5" width="4.5" height="0.7" fill="#4a9a80" opacity="0.6"/><rect x="28.5" y="20.5" width="4.7" height="0.7" fill="#4a9a80" opacity="0.6"/><rect x="34.2" y="20.5" width="5.3" height="0.7" fill="#4a9a80" opacity="0.6"/><rect x="40.6" y="20.5" width="2.3" height="0.7" fill="#4a9a80" opacity="0.6"/><rect x="44.1" y="20.5" width="5.7" height="0.7" fill="#4a9a80" opacity="0.6"/><rect x="50.8" y="20.5" width="3.3" height="0.7" fill="#4a9a80" opacity="0.6"/><rect x="55.2" y="20.5" width="2.4" height="0.7" fill="#4a9a80" opacity="0.6"/><rect x="58.7" y="20.5" width="1.3" height="0.7" fill="#4a9a80" opacity="0.6"/><rect x="16.0" y="22" width="5.6" height="0.7" fill="#4a9a80" opacity="0.6"/><rect x="22.7" y="22" width="3.0" height="0.7" fill="#4a9a80" opacity="0.6"/><rect x="26.9" y="22" width="5.7" height="0.7" fill="#4a9a80" opacity="0.6"/><rect x="33.7" y="22" width="6.9" height="0.7" fill="#4a9a80" opacity="0.6"/><rect x="41.7" y="22" width="4.5" height="0.7" fill="#4a9a80" opacity="0.6"/><rect x="47.2" y="22" width="3.9" height="0.7" fill="#4a9a80" opacity="0.6"/><rect x="52.2" y="22" width="3.8" height="0.7" fill="#4a9a80" opacity="0.6"/><rect x="6.0" y="24.5" width="5.4" height="0.7" fill="#4a9a80" opacity="0.6"/><rect x="12.5" y="24.5" width="5.8" height="0.7" fill="#4a9a80" opacity="0.6"/><rect x="19.5" y="24.5" width="5.1" height="0.7" fill="#4a9a80" opacity="0.6"/><rect x="25.6" y="24.5" width="5.2" height="0.7" fill="#4a9a80" opacity="0.6"/><rect x="32.0" y="24.5" width="2.4" height="0.7" fill="#4a9a80" opacity="0.6"/><rect x="35.4" y="24.5" width="2.7" height="0.7" fill="#4a9a80" opacity="0.6"/><rect x="39.3" y="24.5" width="3.3" height="0.7" fill="#4a9a80" opacity="0.6"/><rect x="43.6" y="24.5" width="5.7" height="0.7" fill="#4a9a80" opacity="0.6"/><rect x="50.5" y="24.5" width="3.5" height="0.7" fill="#4a9a80" opacity="0.6"/><rect x="55.1" y="24.5" width="4.8" height="0.7" fill="#4a9a80" opacity="0.6"/><rect x="61.0" y="24.5" width="2.1" height="0.7" fill="#4a9a80" opacity="0.6"/><rect x="6.0" y="26" width="2.3" height="0.7" fill="#4a9a80" opacity="0.6"/><rect x="9.4" y="26" width="3.3" height="0.7" fill="#4a9a80" opacity="0.6"/><rect x="13.8" y="26" width="5.4" height="0.7" fill="#4a9a80" opacity="0.6"/><rect x="20.3" y="26" width="5.5" height="0.7" fill="#4a9a80" opacity="0.6"/><rect x="26.9" y="26" width="5.4" height="0.7" fill="#4a9a80" opacity="0.6"/><rect x="33.3" y="26" width="3.5" height="0.7" fill="#4a9a80" opacity="0.6"/><rect x="37.9" y="26" width="4.6" height="0.7" fill="#4a9a80" opacity="0.6"/><rect x="43.6" y="26" width="4.3" height="0.7" fill="#4a9a80" opacity="0.6"/><rect x="49.0" y="26" width="4.3" height="0.7" fill="#4a9a80" opacity="0.6"/><rect x="54.4" y="26" width="2.6" height="0.7" fill="#4a9a80" opacity="0.6"/><rect x="58.1" y="26" width="5.9" height="0.7" fill="#4a9a80" opacity="0.6"/><rect x="6.0" y="27.5" width="3.0" height="0.7" fill="#4a9a80" opacity="0.6"/><rect x="10.1" y="27.5" width="6.9" height="0.7" fill="#4a9a80" opacity="0.6"/><rect x="18.1" y="27.5" width="6.7" height="0.7" fill="#4a9a80" opacity="0.6"/><rect x="25.9" y="27.5" width="2.1" height="0.7" fill="#4a9a80" opacity="0.6"/><rect x="29.1" y="27.5" width="4.3" height="0.7" fill="#4a9a80" opacity="0.6"/><rect x="34.5" y="27.5" width="6.1" height="0.7" fill="#4a9a80" opacity="0.6"/><rect x="41.7" y="27.5" width="6.8" height="0.7" fill="#4a9a80" opacity="0.6"/><rect x="49.6" y="27.5" width="4.2" height="0.7" fill="#4a9a80" opacity="0.6"/><rect x="54.9" y="27.5" width="3.3" height="0.7" fill="#4a9a80" opacity="0.6"/><rect x="59.4" y="27.5" width="2.6" height="0.7" fill="#4a9a80" opacity="0.6"/><rect x="6" y="30" width="32" height="0.9" fill="#e08a2a"/></svg>
<div class="t" style="left:7px;top:392px;font-size:9.5px;color:#c4532e">20</div>
<div class="a" style="left:24px;top:393px;width:75.4px;height:43.4px;border:2px solid #7b1717;border-radius:4px;background:#fff"></div>
<svg class="a" style="left:25.4px;top:395px;" width="72" height="41" viewBox="0 0 72 41"><rect x="6.0" y="5.5" width="13.6" height="1.7" fill="#e5000d" opacity="0.6"/><rect x="21.2" y="5.5" width="7.7" height="1.7" fill="#e5000d" opacity="0.6"/><rect x="30.5" y="5.5" width="10.7" height="1.7" fill="#e5000d" opacity="0.6"/><rect x="42.7" y="5.5" width="7.1" height="1.7" fill="#e5000d" opacity="0.6"/><rect x="51.4" y="5.5" width="10.2" height="1.7" fill="#e5000d" opacity="0.6"/><rect x="63.2" y="5.5" width="1.8" height="1.7" fill="#e5000d" opacity="0.6"/><rect x="6.0" y="11" width="2.7" height="0.7" fill="#777" opacity="0.65"/><rect x="9.8" y="11" width="6.1" height="0.7" fill="#777" opacity="0.65"/><rect x="17.0" y="11" width="4.5" height="0.7" fill="#777" opacity="0.65"/><rect x="22.6" y="11" width="6.4" height="0.7" fill="#777" opacity="0.65"/><rect x="30.1" y="11" width="5.5" height="0.7" fill="#777" opacity="0.65"/><rect x="36.8" y="11" width="3.2" height="0.7" fill="#777" opacity="0.65"/><rect x="41.0" y="11" width="6.5" height="0.7" fill="#777" opacity="0.65"/><rect x="48.6" y="11" width="4.4" height="0.7" fill="#777" opacity="0.65"/><rect x="54.1" y="11" width="2.1" height="0.7" fill="#777" opacity="0.65"/><rect x="57.4" y="11" width="2.0" height="0.7" fill="#777" opacity="0.65"/><rect x="60.5" y="11" width="3.5" height="0.7" fill="#777" opacity="0.65"/><rect x="6.0" y="13" width="4.3" height="0.7" fill="#777" opacity="0.65"/><rect x="11.4" y="13" width="3.5" height="0.7" fill="#777" opacity="0.65"/><rect x="16.0" y="13" width="2.7" height="0.7" fill="#777" opacity="0.65"/><rect x="19.8" y="13" width="3.7" height="0.7" fill="#777" opacity="0.65"/><rect x="24.6" y="13" width="3.6" height="0.7" fill="#777" opacity="0.65"/><rect x="29.3" y="13" width="4.7" height="0.7" fill="#777" opacity="0.65"/><rect x="6.0" y="15" width="2.0" height="0.7" fill="#777" opacity="0.65"/><rect x="9.1" y="15" width="5.8" height="0.7" fill="#777" opacity="0.65"/><rect x="16.0" y="15" width="6.2" height="0.7" fill="#777" opacity="0.65"/><rect x="23.3" y="15" width="2.6" height="0.7" fill="#777" opacity="0.65"/><rect x="27.0" y="15" width="4.0" height="0.7" fill="#777" opacity="0.65"/><rect x="6.0" y="17.3" width="5.6" height="0.7" fill="#777" opacity="0.65"/><rect x="12.7" y="17.3" width="6.5" height="0.7" fill="#777" opacity="0.65"/><rect x="20.3" y="17.3" width="3.4" height="0.7" fill="#777" opacity="0.65"/><rect x="24.8" y="17.3" width="3.9" height="0.7" fill="#777" opacity="0.65"/><rect x="29.8" y="17.3" width="4.0" height="0.7" fill="#777" opacity="0.65"/><rect x="34.8" y="17.3" width="5.2" height="0.7" fill="#777" opacity="0.65"/><rect x="6.0" y="21" width="4.9" height="0.7" fill="#777" opacity="0.65"/><rect x="12.0" y="21" width="3.8" height="0.7" fill="#777" opacity="0.65"/><rect x="16.9" y="21" width="4.1" height="0.7" fill="#777" opacity="0.65"/><rect x="22.2" y="21" width="3.4" height="0.7" fill="#777" opacity="0.65"/><rect x="26.7" y="21" width="2.2" height="0.7" fill="#777" opacity="0.65"/><rect x="30.0" y="21" width="2.5" height="0.7" fill="#777" opacity="0.65"/><rect x="33.6" y="21" width="6.2" height="0.7" fill="#777" opacity="0.65"/><rect x="40.9" y="21" width="3.4" height="0.7" fill="#777" opacity="0.65"/><rect x="45.4" y="21" width="6.7" height="0.7" fill="#777" opacity="0.65"/><rect x="53.2" y="21" width="3.2" height="0.7" fill="#777" opacity="0.65"/><rect x="57.5" y="21" width="3.3" height="0.7" fill="#777" opacity="0.65"/><rect x="62.0" y="21" width="2.0" height="0.7" fill="#777" opacity="0.65"/><rect x="6.0" y="23" width="2.9" height="0.7" fill="#777" opacity="0.65"/><rect x="10.0" y="23" width="3.9" height="0.7" fill="#777" opacity="0.65"/><rect x="15.0" y="23" width="6.8" height="0.7" fill="#777" opacity="0.65"/><rect x="22.9" y="23" width="6.4" height="0.7" fill="#777" opacity="0.65"/><rect x="30.4" y="23" width="6.1" height="0.7" fill="#777" opacity="0.65"/><rect x="37.6" y="23" width="5.2" height="0.7" fill="#777" opacity="0.65"/><rect x="43.8" y="23" width="6.6" height="0.7" fill="#777" opacity="0.65"/><rect x="51.5" y="23" width="6.5" height="0.7" fill="#777" opacity="0.65"/></svg>
</div>
<div class="a" style="left:188px;top:153px;width:510px;height:288px;background:#e2e1e3"></div>
<div class="a" style="left:189px;top:154px;width:508px;height:286px;background:#fff"></div>
<svg class="a" style="left:765px;top:150px;" width="8" height="6" viewBox="0 0 8 6"><path d="M1 5 L4 1.5 L7 5 Z" fill="#555"/></svg>
<div class="a" style="left:767.5px;top:260px;width:3px;height:12px;background:#8a8a8a;border-radius:2px"></div>
<svg class="a" style="left:765px;top:405px;" width="8" height="6" viewBox="0 0 8 6"><path d="M1 1 L4 4.5 L7 1 Z" fill="#555"/></svg>
<svg class="a" style="left:765px;top:414px;" width="8" height="9" viewBox="0 0 8 9"><path d="M1 4 L4 1 L7 4 Z M1 8 L4 5 L7 8 Z" fill="#555"/></svg>
<svg class="a" style="left:765px;top:423px;" width="8" height="9" viewBox="0 0 8 9"><path d="M1 1 L4 4 L7 1 Z M1 5 L4 8 L7 5 Z" fill="#555"/></svg>
<div class="t" style="left:228.5px;top:181.26px;font-size:25px;color:#e5000d;font-family:'Liberation Serif';"><b>Регулювання власних емоцій і станів</b></div>
<div class="t" style="left:227.6px;top:232.36px;font-size:13.4px;color:#161616;font-family:'Liberation Sans';-webkit-text-stroke:0.2px #161616;">Регуляція емоцій - процес, за допомогою якого людина впливає на:</div>
<div class="t" style="left:227.6px;top:252.86px;font-size:13.4px;color:#161616;font-family:'Liberation Sans';-webkit-text-stroke:0.2px #161616;">- <b>те, які</b> емоції вона переживає</div>
<div class="t" style="left:227.6px;top:273.86px;font-size:13.4px;color:#161616;font-family:'Liberation Sans';-webkit-text-stroke:0.2px #161616;">- <b>коли</b> вона їх переживає</div>
<div class="t" style="left:227.6px;top:294.86px;font-size:13.4px;color:#161616;font-family:'Liberation Sans';-webkit-text-stroke:0.2px #161616;">- <b>як</b> вона її <b>виражає</b> (Gross et al., 1998)</div>
<div class="t" style="left:227.6px;top:338.66px;font-size:13.4px;color:#161616;font-family:'Liberation Sans';-webkit-text-stroke:0.2px #161616;">Регуляція може бути запроваджена на будь-якому етапі емоційного</div>
<div class="t" style="left:227.6px;top:354.46px;font-size:13.4px;color:#161616;font-family:'Liberation Sans';-webkit-text-stroke:0.2px #161616;">процесу - до, під час або після виникнення емоційної реакції.</div>
<svg class="a" style="left:0px;top:0px;" width="944" height="500" viewBox="0 0 944 500"><path d="M452 300 C446 292 438 282 429.5 270 C426 265.5 428 262.5 433 264 C455 271 500 297 528 315 C545 325 558 335 566.5 343 C556 341 545 340 536 339 C530 338.5 526 337.5 525 335.5 C524.5 333.5 527 333.5 527.5 335.5" fill="none" stroke="#f0cf3a" stroke-width="1.3" stroke-linecap="round"/><circle cx="491" cy="374" r="0.6" fill="#f0cf3a"/></svg>
<svg class="a" style="left:445px;top:246px;" width="8" height="11" viewBox="0 0 8 11"><path d="M0.5 0.5 V8.5 L2.6 6.6 L4 9.8 L5.2 9.3 L3.9 6.2 L6.6 6.2 Z" fill="#fff" stroke="#9a9a9a" stroke-width="0.7"/></svg>
<div class="a" style="left:4px;top:446px;width:771px;height:14px;background:#f3f3f4"></div>
<div class="a" style="left:4px;top:446px;width:771px;height:1px;background:#e3e3e5"></div>
<div class="t" style="left:11.0px;top:450.6px;font-size:6.2px;color:#3c3c3c;font-weight:normal;font-family:'Liberation Sans';">Слайд 20 з 45</div>
<svg class="a" style="left:61px;top:449px;" width="10" height="10" viewBox="0 0 10 10"><rect x="0.5" y="0.5" width="7" height="8" fill="none" stroke="#666" stroke-width="0.8"/><path d="M5 5 L9 9 M9 5 L5 9" stroke="#666" stroke-width="0.8"/></svg>
<div class="t" style="left:79.4px;top:450.5px;font-size:6.4px;color:#3c3c3c;font-weight:normal;font-family:'Liberation Sans';">українська</div>
<svg class="a" style="left:119px;top:449px;" width="11" height="10" viewBox="0 0 11 10"><path d="M5 0.5 L6.2 3.8 L9.8 3.8 L6.9 6 L8 9.5 L5 7.3 L2 9.5 L3.1 6 L0.2 3.8 L3.8 3.8 Z" fill="none" stroke="#666" stroke-width="0.8"/></svg>
<div class="t" style="left:130.6px;top:450.6px;font-size:6.26px;color:#3c3c3c;font-weight:normal;font-family:'Liberation Sans';">Спеціальні можливості: щось не так</div>
<svg class="a" style="left:466px;top:448px;" width="12" height="11" viewBox="0 0 12 11"><path d="M4 2.5 L6 0.5 L8 2.5" fill="none" stroke="#666" stroke-width="0.8"/><path d="M0.5 5 H11.5 M0.5 7.5 H11.5 M0.5 10 H11.5" stroke="#666" stroke-width="0.8"/></svg>
<div class="t" style="left:478.0px;top:450.6px;font-size:6.2px;color:#3c3c3c;font-weight:normal;font-family:'Liberation Sans';">Нотатки</div>
<svg class="a" style="left:510px;top:448px;" width="12" height="11" viewBox="0 0 12 11"><path d="M0.5 0.5 H11.5 V7.5 H4 L1.5 10 V7.5 H0.5 Z" fill="none" stroke="#666" stroke-width="0.8"/></svg>
<div class="t" style="left:523.0px;top:450.4px;font-size:6.5px;color:#3c3c3c;font-weight:normal;font-family:'Liberation Sans';">Примітки</div>
<div class="a" style="left:561.7px;top:447.5px;width:23.7px;height:12px;background:#dededf"></div>
<svg class="a" style="left:568px;top:449px;" width="10" height="9" viewBox="0 0 10 9"><rect x="0.5" y="0.5" width="9" height="8" fill="none" stroke="#555" stroke-width="0.9"/><rect x="2.5" y="2.5" width="5" height="4" fill="none" stroke="#555" stroke-width="0.8"/></svg>
<svg class="a" style="left:593px;top:449px;" width="10" height="9" viewBox="0 0 10 9"><rect x="0.5" y="0.5" width="3.5" height="3.5" fill="none" stroke="#666" stroke-width="0.8"/><rect x="6" y="0.5" width="3.5" height="3.5" fill="none" stroke="#666" stroke-width="0.8"/><rect x="0.5" y="5" width="3.5" height="3.5" fill="none" stroke="#666" stroke-width="0.8"/><rect x="6" y="5" width="3.5" height="3.5" fill="none" stroke="#666" stroke-width="0.8"/></svg>
<svg class="a" style="left:616px;top:449px;" width="10" height="9" viewBox="0 0 10 9"><path d="M0.5 1 H4.5 V8.5 H0.5 Z M5.5 1 H9.5 V8.5 H5.5 Z" fill="none" stroke="#666" stroke-width="0.8"/></svg>
<svg class="a" style="left:640px;top:449px;" width="10" height="10" viewBox="0 0 10 10"><rect x="0.5" y="0.5" width="9" height="5.5" fill="none" stroke="#666" stroke-width="0.8"/><path d="M5 6 V9.5 M3 9.5 H7" stroke="#666" stroke-width="0.8"/></svg>
<div class="a" style="left:660.5px;top:453px;width:4px;height:1px;background:#777"></div>
<div class="a" style="left:668.6px;top:453px;width:60px;height:1px;background:#8a8a8a"></div>
<div class="a" style="left:686.5px;top:449.5px;width:3px;height:7px;background:#666"></div>
<div class="a" style="left:701px;top:451.5px;width:1px;height:4px;background:#777"></div>
<div class="t" style="left:731.0px;top:449.1px;font-size:8px;color:#777;font-weight:normal;font-family:'Liberation Sans';">+</div>
<div class="t" style="left:743.8px;top:450.8px;font-size:5.9px;color:#3c3c3c;font-weight:normal;font-family:'Liberation Sans';">66%</div>
<svg class="a" style="left:762px;top:448px;" width="11" height="11" viewBox="0 0 11 11"><path d="M5.5 0.5 L7 4 L10.5 5.5 L7 7 L5.5 10.5 L4 7 L0.5 5.5 L4 4 Z" fill="none" stroke="#666" stroke-width="0.8"/></svg>
<div class="a" style="left:827px;top:5px;width:109px;height:61.6px;border-radius:4px;overflow:hidden;background:linear-gradient(90deg,#cac8c6 0%,#c6c4c2 55%,#bdbbb9 85%,#b2b0ae 100%);border:2px solid #35e08e;box-sizing:border-box">
<div class="a" style="left:74px;top:58px;width:10px;height:4px;background:#dc8e3c;border-radius:30%;filter:blur(1px);"></div>
<div class="a" style="left:42.6px;top:23px;width:28.4px;height:22px;background:#c69e62;border-radius:48%;filter:blur(1.3px);"></div>
<div class="a" style="left:48px;top:28px;width:18px;height:18px;background:#d6a48c;border-radius:45%;filter:blur(1.2px);"></div>
<div class="a" style="left:54px;top:38px;width:6px;height:4px;background:#8a5e50;border-radius:50%;filter:blur(1px);"></div>
<div class="a" style="left:0.3999999999999999px;top:46.099999999999994px;width:74.2px;height:11.8px;border-radius:3px;background:rgba(40,40,42,.74)"></div>
<div class="t" style="left:2px;top:47.3px;font-size:8.5px;color:#e6e6e6">Світлана Чуніхіна</div>
</div>
<div class="a" style="left:827px;top:67.6px;width:109px;height:60.3px;border-radius:4px;overflow:hidden;background:linear-gradient(180deg,#f2ede4 0%,#f6f2ea 50%,#eee8dc 100%);">
<div class="a" style="left:0;top:0;width:109px;height:61px;background:linear-gradient(150deg,#dc9a42 0%,#e8b468 14%,rgba(240,200,130,0) 30%)"></div>
<div class="a" style="left:38px;top:0px;width:36px;height:5px;background:#dfa24c;border-radius:20%;filter:blur(1px);"></div>
<div class="a" style="left:8px;top:10px;width:22px;height:22px;background:#f5efdf;border-radius:50%;filter:blur(0.3px);border:2px solid #2f3f90"></div>
<div class="a" style="left:13px;top:14px;width:12px;height:15px;background:#dcae52;border-radius:45%;filter:blur(1px);"></div>
<div class="a" style="left:35.8px;top:9.399999999999999px;width:65.2px;height:2.6px;background:#46529c;opacity:.6;filter:blur(.5px)"></div>
<div class="a" style="left:35.8px;top:15.5px;width:65.2px;height:2.6px;background:#46529c;opacity:.6;filter:blur(.5px)"></div>
<div class="a" style="left:35.8px;top:24.4px;width:57.2px;height:2.6px;background:#46529c;opacity:.6;filter:blur(.5px)"></div>
<div class="a" style="left:35.8px;top:29.099999999999998px;width:57.2px;height:2.6px;background:#46529c;opacity:.6;filter:blur(.5px)"></div>
<div class="a" style="left:35.8px;top:33.900000000000006px;width:15.200000000000003px;height:2.6px;background:#46529c;opacity:.6;filter:blur(.5px)"></div>
<div class="a" style="left:35.8px;top:20px;width:65px;height:0.8px;background:#7a84b8;opacity:.6"></div>
<div class="a" style="left:85px;top:48.8px;width:23.5px;height:10.200000000000003px;background:#e79a32;border-radius:10%;filter:blur(0.8px);"></div>
<div class="a" style="left:37.8px;top:40px;width:59.900000000000006px;height:26px;background:#3f63c4;border-radius:45% 45% 10% 10%;filter:blur(1.2px);"></div>
<div class="a" style="left:56px;top:38px;width:10px;height:8px;background:#41354a;border-radius:40%;filter:blur(1px);"></div>
<div class="a" style="left:44px;top:8.4px;width:30px;height:17.6px;background:#6e4434;border-radius:50% 50% 30% 30%;filter:blur(1.2px);"></div>
<div class="a" style="left:45px;top:16.8px;width:28px;height:27.2px;background:#d4a488;border-radius:42% 42% 48% 48%;filter:blur(1.2px);"></div>
<div class="a" style="left:45.6px;top:24.8px;width:26px;height:2px;background:#5a5a62;opacity:.75;filter:blur(.5px)"></div>
<div class="a" style="left:2.4px;top:46.9px;width:68.6px;height:11.8px;border-radius:3px;background:rgba(40,40,42,.74)"></div>
<svg class="a" style="left:4.8px;top:48.4px" width="9" height="9" viewBox="0 0 9 9"><rect x="3" y="0.8" width="3" height="4.6" rx="1.5" fill="#e0362c"/><path d="M1.8 4.2 Q1.8 7 4.5 7 Q7.2 7 7.2 4.2 M4.5 7 V8.5" fill="none" stroke="#e0362c" stroke-width="0.8"/><path d="M1 8.5 L8 0.5" stroke="#e0362c" stroke-width="0.9"/></svg>
<div class="t" style="left:16.7px;top:48.1px;font-size:8.5px;color:#e6e6e6">Ольга Лебідь</div>
</div>
<div class="a" style="left:827px;top:128.8px;width:109px;height:60.5px;border-radius:4px;overflow:hidden;background:linear-gradient(90deg,#c2c2c2 0%,#c6c6c6 55%,#cdcdcd 85%,#d8d8d8 95%,#cbcbcb 100%);">
<div class="a" style="left:38px;top:35px;width:18px;height:13px;background:#a9a9a9;border-radius:40%;filter:blur(2.5px);"></div>
<div class="a" style="left:54px;top:17px;width:31px;height:31px;background:#3a2a27;border-radius:50% 50% 25% 25%;filter:blur(1.3px);"></div>
<div class="a" style="left:63.7px;top:23.7px;width:17.299999999999997px;height:21.099999999999998px;background:#dfb5a5;border-radius:45%;filter:blur(1.1px);"></div>
<div class="a" style="left:78.6px;top:30px;width:10.900000000000006px;height:13px;background:#d8ab9a;border-radius:45%;filter:blur(1px);"></div>
<div class="a" style="left:42px;top:45px;width:53px;height:19px;background:#e8d9c9;border-radius:40% 40% 0 0;filter:blur(1.3px);"></div>
<div class="a" style="left:2.4px;top:47.099999999999994px;width:83.6px;height:11.8px;border-radius:3px;background:rgba(40,40,42,.74)"></div>
<svg class="a" style="left:4.8px;top:48.599999999999994px" width="9" height="9" viewBox="0 0 9 9"><rect x="3" y="0.8" width="3" height="4.6" rx="1.5" fill="#e0362c"/><path d="M1.8 4.2 Q1.8 7 4.5 7 Q7.2 7 7.2 4.2 M4.5 7 V8.5" fill="none" stroke="#e0362c" stroke-width="0.8"/><path d="M1 8.5 L8 0.5" stroke="#e0362c" stroke-width="0.9"/></svg>
<div class="t" style="left:16.7px;top:48.3px;font-size:8.5px;color:#e6e6e6">Поліна Старцева</div>
</div>
<div class="a" style="left:827px;top:190px;width:109px;height:60px;border-radius:4px;overflow:hidden;background:#181a1d;">
<div class="a" style="left:30.3px;top:4.8px;width:49.7px;height:53px;border-radius:2px 6px 0 0;overflow:hidden;background:#d6d6da">
<div class="a" style="left:0px;top:0px;width:27px;height:36px;background:#2a2220;border-radius:50% 50% 30% 20%;filter:blur(1.2px);"></div>
<div class="a" style="left:-3px;top:10px;width:13px;height:40px;background:#2a2220;border-radius:30%;filter:blur(1.2px);"></div>
<div class="a" style="left:3.4px;top:6.2px;width:21.8px;height:27.000000000000004px;background:#e4bba4;border-radius:45%;filter:blur(1.1px);"></div>
<div class="a" style="left:0px;top:30.7px;width:18.4px;height:24.3px;background:#dab098;border-radius:35%;filter:blur(1.3px);"></div>
<div class="a" style="left:18.4px;top:20.2px;width:25.800000000000004px;height:34.8px;background:#252222;border-radius:45% 45% 10% 10%;filter:blur(1.3px);"></div>
<div class="a" style="left:28.5px;top:28px;width:6.5px;height:6.5px;background:#8a8580;border-radius:50%;filter:blur(1px);"></div>
</div>
<div class="a" style="left:2.4px;top:47.099999999999994px;width:79px;height:11.8px;border-radius:3px;background:rgba(40,40,42,.74)"></div>
<svg class="a" style="left:4.8px;top:48.599999999999994px" width="9" height="9" viewBox="0 0 9 9"><rect x="3" y="0.8" width="3" height="4.6" rx="1.5" fill="#e0362c"/><path d="M1.8 4.2 Q1.8 7 4.5 7 Q7.2 7 7.2 4.2 M4.5 7 V8.5" fill="none" stroke="#e0362c" stroke-width="0.8"/><path d="M1 8.5 L8 0.5" stroke="#e0362c" stroke-width="0.9"/></svg>
<div class="t" style="left:16.7px;top:48.3px;font-size:8.5px;color:#e6e6e6">Vita Kolesnikova</div>
</div>
<div class="a" style="left:827px;top:250.8px;width:109px;height:60.4px;border-radius:4px;overflow:hidden;background:linear-gradient(180deg,#d4d4d2 0%,#d0d0ce 100%);">
<div class="a" style="left:-2px;top:-2px;width:52px;height:32px;background:#dcdcda;border-radius:20%;filter:blur(2px);"></div>
<div class="a" style="left:30px;top:7px;width:24px;height:19px;background:#8e9c80;border-radius:50%;filter:blur(2.2px);"></div>
<div class="a" style="left:0;top:0;width:109px;height:61px;background:linear-gradient(208deg,rgba(0,0,0,0) 50%,#efefed 51%,#efefed 56%,rgba(0,0,0,0) 57%)"></div>
<div class="a" style="left:85px;top:0px;width:23.5px;height:11px;background:#c2aa9a;border-radius:20%;filter:blur(1.5px);"></div>
<div class="a" style="left:81px;top:12px;width:27.5px;height:29px;background:#e6e6e6;border-radius:30%;filter:blur(1.5px);"></div>
<div class="a" style="left:36px;top:15px;width:66px;height:29px;background:#454446;border-radius:40% 40% 30% 30%;filter:blur(1.3px);"></div>
<div class="a" style="left:46px;top:22px;width:12px;height:16px;background:#6a6a6a;border-radius:40%;filter:blur(1.5px);"></div>
<div class="a" style="left:80px;top:22px;width:12px;height:14px;background:#7a7a7a;border-radius:40%;filter:blur(1.5px);"></div>
<div class="a" style="left:62px;top:20.7px;width:14px;height:15.3px;background:#e2e2e2;border-radius:40%;filter:blur(1.4px);"></div>
<div class="a" style="left:50px;top:-5px;width:41px;height:19px;background:#262424;border-radius:50%;filter:blur(1.2px);"></div>
<div class="a" style="left:61px;top:-3px;width:23px;height:21px;background:#c8a08e;border-radius:45%;filter:blur(1.1px);"></div>
<div class="a" style="left:23px;top:33px;width:21px;height:15px;background:#e6e6e6;border-radius:40%;filter:blur(1.2px);"></div>
<div class="a" style="left:21.5px;top:37px;width:10.5px;height:25px;background:#2a2a2a;border-radius:30%;filter:blur(1.2px);"></div>
<div class="a" style="left:-4px;top:19px;width:25.5px;height:31.6px;background:#d4a090;border-radius:45%;filter:blur(1.2px);"></div>
<div class="a" style="left:0;top:28.5px;width:26px;height:4px;background:#f2f2f4;border-radius:2px;filter:blur(.5px)"></div>
<div class="a" style="left:53px;top:37px;width:49px;height:27px;background:#d4a896;border-radius:45% 45% 30% 30%;filter:blur(1.3px);"></div>
<div class="a" style="left:97.7px;top:33px;width:12.299999999999997px;height:29px;background:#3a3c40;border-radius:20%;filter:blur(1.2px);"></div>
<div class="a" style="left:2.4px;top:47.4px;width:67.4px;height:11.8px;border-radius:3px;background:rgba(40,40,42,.74)"></div>
<svg class="a" style="left:4.8px;top:48.9px" width="9" height="9" viewBox="0 0 9 9"><rect x="3" y="0.8" width="3" height="4.6" rx="1.5" fill="#e0362c"/><path d="M1.8 4.2 Q1.8 7 4.5 7 Q7.2 7 7.2 4.2 M4.5 7 V8.5" fill="none" stroke="#e0362c" stroke-width="0.8"/><path d="M1 8.5 L8 0.5" stroke="#e0362c" stroke-width="0.9"/></svg>
<div class="t" style="left:16.7px;top:48.6px;font-size:8.5px;color:#e6e6e6">Ірина Асєєва</div>
</div>
<div class="a" style="left:827px;top:312px;width:109px;height:60.2px;border-radius:4px;overflow:hidden;background:#e6e6e4;">
<svg class="a" style="left:0;top:0;filter:blur(0.6px)" width="109" height="61" viewBox="0 0 109 61"><polygon points="77,0 109,0 109,61 60,61 69,23" fill="#c9c3a6"/><polygon points="89.5,20 109,61 72,61" fill="#dcd7c1"/><polygon points="0,22 38,40 50,61 0,61" fill="#cfd0bc"/></svg>
<div class="a" style="left:34px;top:31px;width:6px;height:9px;background:#8a8a8a;border-radius:40%;filter:blur(1px);"></div>
<div class="a" style="left:41.5px;top:42px;width:50.5px;height:24px;background:#2a2a2a;border-radius:45% 45% 0 0;filter:blur(1.2px);"></div>
<div class="a" style="left:57px;top:23px;width:18px;height:14px;background:#7a5840;border-radius:50%;filter:blur(1.2px);"></div>
<div class="a" style="left:58px;top:28.7px;width:16px;height:17.3px;background:#d6b49e;border-radius:45%;filter:blur(1.1px);"></div>
<div class="a" style="left:58px;top:34.5px;width:16px;height:2.5px;background:#3a3a3a;border-radius:30%;filter:blur(0.5px);opacity:.8"></div>
<div class="a" style="left:2.4px;top:47.4px;width:95.3px;height:11.8px;border-radius:3px;background:rgba(40,40,42,.74)"></div>
<svg class="a" style="left:4.8px;top:48.9px" width="9" height="9" viewBox="0 0 9 9"><rect x="3" y="0.8" width="3" height="4.6" rx="1.5" fill="#e0362c"/><path d="M1.8 4.2 Q1.8 7 4.5 7 Q7.2 7 7.2 4.2 M4.5 7 V8.5" fill="none" stroke="#e0362c" stroke-width="0.8"/><path d="M1 8.5 L8 0.5" stroke="#e0362c" stroke-width="0.9"/></svg>
<div class="t" style="left:16.7px;top:48.6px;font-size:8.5px;color:#e6e6e6">Светлана Аврамова</div>
</div>
<div class="a" style="left:827px;top:373.7px;width:109px;height:60.4px;border-radius:4px;overflow:hidden;background:linear-gradient(90deg,#d6d6d6 0%,#e2e2e2 30%,#e8e8e8 60%,#eeeeee 75%,#e4e4e4 100%);">
<div class="a" style="left:20px;top:41.3px;width:64px;height:24.700000000000003px;background:#2f5cb8;border-radius:45% 45% 0 0;filter:blur(1.2px);"></div>
<div class="a" style="left:57px;top:37px;width:11px;height:9px;background:#5a3a3a;border-radius:40%;filter:blur(1px);"></div>
<div class="a" style="left:36.5px;top:6.3px;width:28.5px;height:22.7px;background:#4a3a34;border-radius:50% 50% 35% 35%;filter:blur(1.2px);"></div>
<div class="a" style="left:38px;top:20px;width:26px;height:24px;background:#d0a696;border-radius:42% 42% 48% 48%;filter:blur(1.1px);"></div>
<div class="a" style="left:37px;top:12px;width:28px;height:10px;background:#4a3a34;border-radius:50%;filter:blur(1.2px);"></div>
<div class="a" style="left:2.4px;top:47.4px;width:89.5px;height:11.8px;border-radius:3px;background:rgba(40,40,42,.74)"></div>
<svg class="a" style="left:4.8px;top:48.9px" width="9" height="9" viewBox="0 0 9 9"><rect x="3" y="0.8" width="3" height="4.6" rx="1.5" fill="#e0362c"/><path d="M1.8 4.2 Q1.8 7 4.5 7 Q7.2 7 7.2 4.2 M4.5 7 V8.5" fill="none" stroke="#e0362c" stroke-width="0.8"/><path d="M1 8.5 L8 0.5" stroke="#e0362c" stroke-width="0.9"/></svg>
<div class="t" style="left:16.7px;top:48.6px;font-size:8.5px;color:#e6e6e6"><span style="font-size:8.3px">Daria Parshyntseva</span></div>
</div>
<div class="a" style="left:827px;top:435.2px;width:109px;height:61px;border-radius:4px;overflow:hidden;background:linear-gradient(90deg,#bcbcbc 0%,#cacaca 15%,#c8c8c8 25%,#3a3230 60%,#3a3230 100%);">
<div class="a" style="left:0px;top:0px;width:60px;height:6px;background:#d8d8d8;border-radius:10%;filter:blur(1.2px);"></div>
<div class="a" style="left:65px;top:0px;width:44px;height:35px;background:#3a302e;border-radius:5%;filter:blur(1px);"></div>
<div class="a" style="left:82.7px;top:0;width:1.5px;height:32px;background:#a8a8a8;filter:blur(.4px)"></div>
<div class="a" style="left:86.8px;top:0;width:1.5px;height:32px;background:#a8a8a8;filter:blur(.4px)"></div>
<div class="a" style="left:89px;top:38px;width:15px;height:10px;background:#6e6a66;border-radius:20%;filter:blur(1px);"></div>
<div class="a" style="left:23px;top:1px;width:50px;height:63px;background:#1d1b1c;border-radius:50% 50% 20% 20%;filter:blur(1.4px);"></div>
<div class="a" style="left:31.7px;top:14.5px;width:33.3px;height:31.5px;background:#d9c0b8;border-radius:45%;filter:blur(1.3px);"></div>
<div class="a" style="left:31px;top:10px;width:35px;height:10px;background:#1d1b1c;border-radius:50% 50% 20% 20%;filter:blur(1.2px);"></div>
<div class="a" style="left:2.4px;top:47.599999999999994px;width:94.6px;height:11.8px;border-radius:3px;background:rgba(40,40,42,.74)"></div>
<svg class="a" style="left:4.8px;top:49.099999999999994px" width="9" height="9" viewBox="0 0 9 9"><rect x="3" y="0.8" width="3" height="4.6" rx="1.5" fill="#e0362c"/><path d="M1.8 4.2 Q1.8 7 4.5 7 Q7.2 7 7.2 4.2 M4.5 7 V8.5" fill="none" stroke="#e0362c" stroke-width="0.8"/><path d="M1 8.5 L8 0.5" stroke="#e0362c" stroke-width="0.9"/></svg>
<div class="t" style="left:16.7px;top:48.8px;font-size:8.5px;color:#e6e6e6">Наталья Кужельная</div>
</div>
</body></html>
